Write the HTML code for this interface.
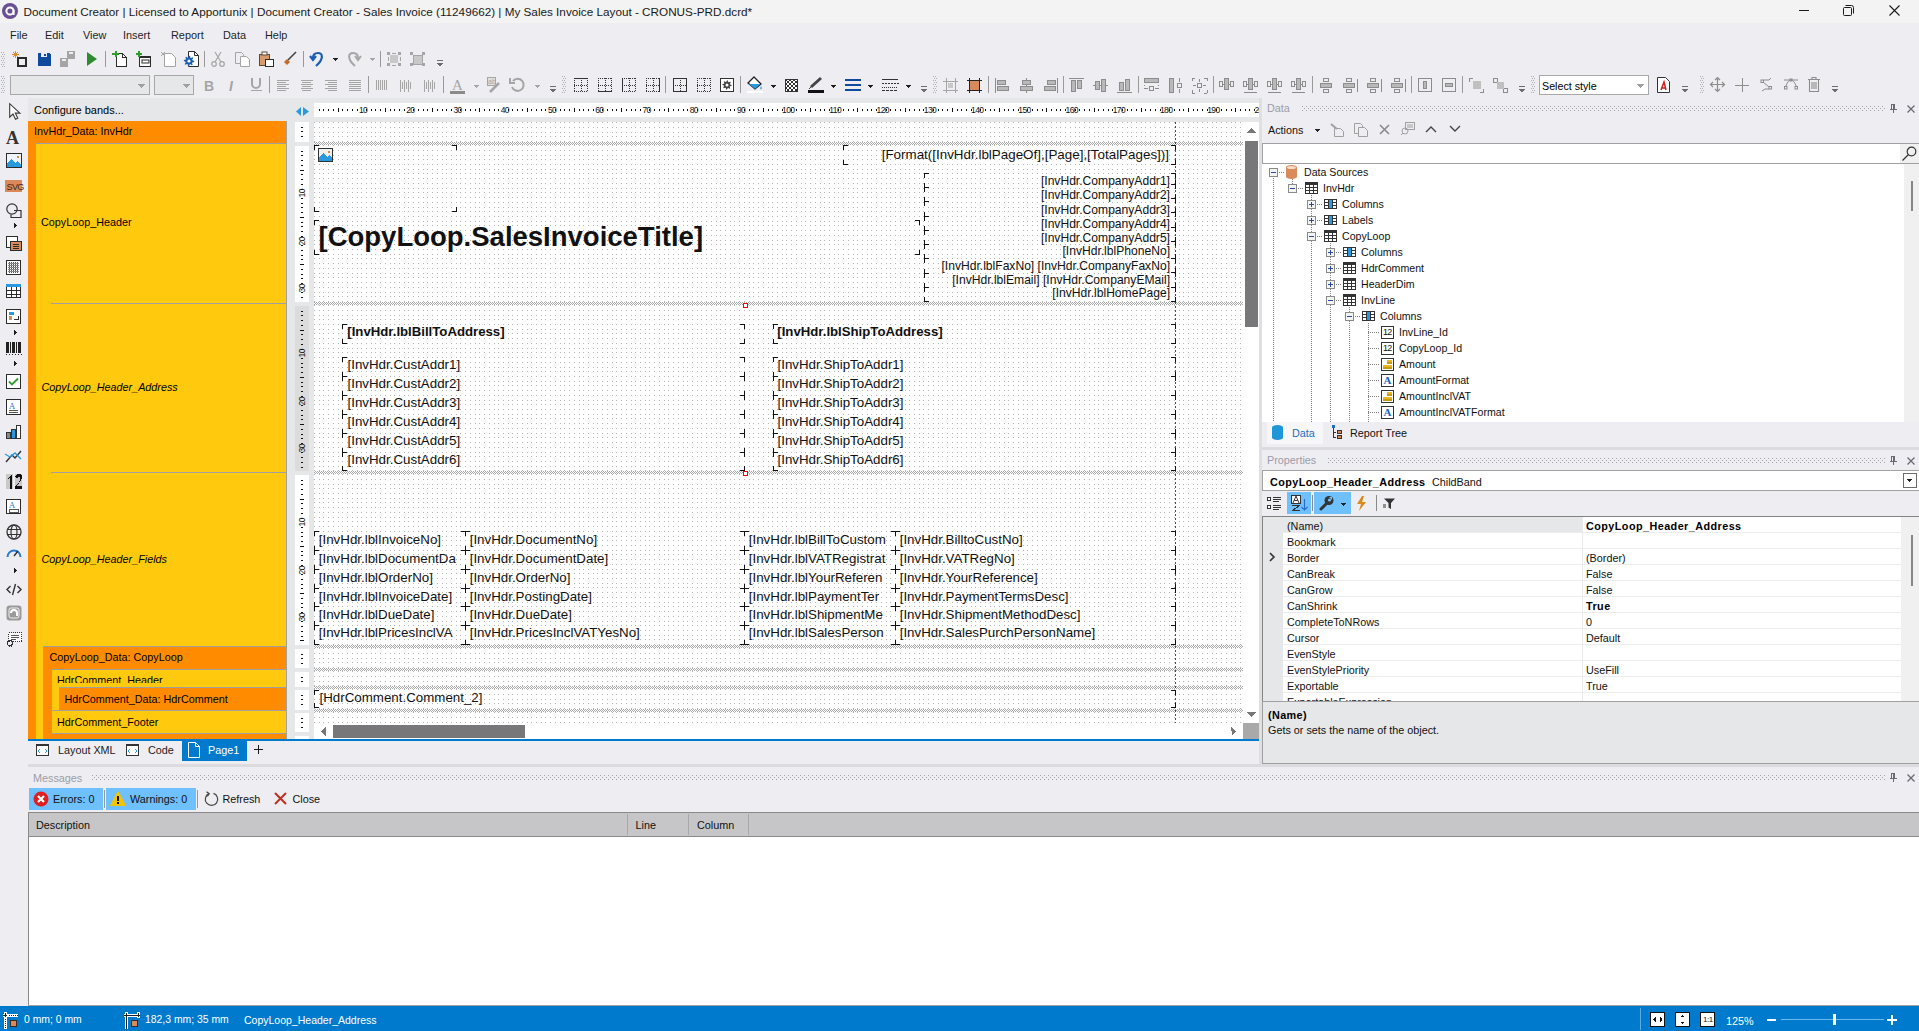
<!DOCTYPE html>
<html><head><meta charset="utf-8">
<style>
*{margin:0;padding:0;box-sizing:border-box}
html,body{width:1919px;height:1031px;overflow:hidden;background:#eeeef2;font-family:"Liberation Sans",sans-serif;font-size:11px;color:#000;position:relative}
.a{position:absolute;display:block}
.t{position:absolute;white-space:nowrap;line-height:1}
svg{overflow:visible}
</style></head><body>
<svg width="0" height="0" style="position:absolute"><defs>
<pattern id="pdh" width="2" height="1" patternUnits="userSpaceOnUse"><rect width="1" height="1" fill="#808080"/></pattern>
<pattern id="pdv" width="1" height="2" patternUnits="userSpaceOnUse"><rect width="1" height="1" fill="#808080"/></pattern>
<pattern id="pgr" width="4" height="4" patternUnits="userSpaceOnUse"><rect width="1" height="1" fill="#a4a4a8"/><rect x="2" y="2" width="1" height="1" fill="#a4a4a8"/></pattern>
<pattern id="pck" width="2" height="2" patternUnits="userSpaceOnUse"><rect width="1" height="1" fill="#a8a8a8"/><rect x="1" y="1" width="1" height="1" fill="#a8a8a8"/></pattern>
<pattern id="ptg" width="4" height="4" patternUnits="userSpaceOnUse"><rect width="1" height="1" fill="#a4a4a8"/><rect x="2" y="2" width="1" height="1" fill="#a4a4a8"/></pattern>
</defs></svg>
<div class="a" style="left:0px;top:0px;width:1919px;height:23px;background:#f3f3f3;"></div>
<svg class="a" style="left:2px;top:3px;" width="17" height="17" viewBox="0 0 17 17"><circle cx="8" cy="8" r="8" fill="#6a4f96"/><circle cx="8" cy="8" r="3.6" fill="none" stroke="#fff" stroke-width="2"/><rect x="10.6" y="7" width="2" height="5" fill="#fff"/></svg>
<div class="t" style="left:23.5px;top:5.86px;font-size:11.73px;color:#1a1a1a;">Document Creator | Licensed to Apportunix | Document Creator - Sales Invoice (11249662) | My Sales Invoice Layout - CRONUS-PRD.dcrd*</div>
<div class="a" style="left:1799px;top:10px;width:10px;height:1px;background:#1a1a1a;"></div>
<svg class="a" style="left:1843px;top:5px;shape-rendering:auto" width="11" height="11" viewBox="0 0 11 11" shape-rendering="crispEdges"><rect x="0.5" y="2.5" width="8" height="8" fill="none" stroke="#1a1a1a" rx="1"/><path d="M2.5 0.5h6a2 2 0 0 1 2 2v6" fill="none" stroke="#1a1a1a"/></svg>
<svg class="a" style="left:1889px;top:5px;" width="11" height="11" viewBox="0 0 11 11"><path d="M0.5 0.5L10.5 10.5M10.5 0.5L0.5 10.5" stroke="#1a1a1a" stroke-width="1.1"/></svg>
<div class="a" style="left:0px;top:23px;width:1919px;height:75px;background:#eeeef2;"></div>
<div class="t" style="left:10px;top:30.25px;font-size:10.9px;color:#1e1e1e;">File</div>
<div class="t" style="left:45px;top:30.25px;font-size:10.9px;color:#1e1e1e;">Edit</div>
<div class="t" style="left:83px;top:30.25px;font-size:10.9px;color:#1e1e1e;">View</div>
<div class="t" style="left:123px;top:30.25px;font-size:10.9px;color:#1e1e1e;">Insert</div>
<div class="t" style="left:171px;top:30.25px;font-size:10.9px;color:#1e1e1e;">Report</div>
<div class="t" style="left:223px;top:30.25px;font-size:10.9px;color:#1e1e1e;">Data</div>
<div class="t" style="left:265px;top:30.25px;font-size:10.9px;color:#1e1e1e;">Help</div>
<svg class="a" style="left:1px;top:52px;" width="4" height="16" viewBox="0 0 4 16" shape-rendering="crispEdges"><rect x="0" y="0" width="1" height="1" fill="#b0b0b8"/><rect x="2" y="0" width="1" height="1" fill="#b0b0b8"/><rect x="1" y="2" width="1" height="1" fill="#b0b0b8"/><rect x="3" y="2" width="1" height="1" fill="#b0b0b8"/><rect x="0" y="4" width="1" height="1" fill="#b0b0b8"/><rect x="2" y="4" width="1" height="1" fill="#b0b0b8"/><rect x="1" y="6" width="1" height="1" fill="#b0b0b8"/><rect x="3" y="6" width="1" height="1" fill="#b0b0b8"/><rect x="0" y="8" width="1" height="1" fill="#b0b0b8"/><rect x="2" y="8" width="1" height="1" fill="#b0b0b8"/><rect x="1" y="10" width="1" height="1" fill="#b0b0b8"/><rect x="3" y="10" width="1" height="1" fill="#b0b0b8"/><rect x="0" y="12" width="1" height="1" fill="#b0b0b8"/><rect x="2" y="12" width="1" height="1" fill="#b0b0b8"/><rect x="1" y="14" width="1" height="1" fill="#b0b0b8"/><rect x="3" y="14" width="1" height="1" fill="#b0b0b8"/></svg>
<svg class="a" style="left:12px;top:51px;" width="16" height="16" viewBox="0 0 16 16" shape-rendering="crispEdges"><path d="M5 6h10v10h-10z M7 8v6h6v-6z" fill="#2b2b2b" fill-rule="evenodd"/><path d="M3 0v7M0 3.5h7M1 1l5 5M6 1l-5 5" stroke="#e08a2c" stroke-width="1"/></svg>
<svg class="a" style="left:38px;top:53px;" width="13" height="13" viewBox="0 0 13 13" shape-rendering="crispEdges"><path d="M0 0h11l2 2v11h-13z" fill="#0e4a9e"/><rect x="3" y="0" width="6" height="4" fill="#eeeef2"/><rect x="6" y="1" width="2" height="2" fill="#0e4a9e"/></svg>
<svg class="a" style="left:60px;top:51px;" width="16" height="16" viewBox="0 0 16 16" shape-rendering="crispEdges"><path d="M7 0h8v8h-8z M0 7h8v9h-8z" fill="#a5a5a5"/><rect x="9" y="1" width="4" height="2" fill="#eeeef2"/><rect x="2" y="8" width="4" height="2" fill="#eeeef2"/></svg>
<svg class="a" style="left:87px;top:52px;shape-rendering:auto" width="10" height="14" viewBox="0 0 10 14" shape-rendering="crispEdges"><path d="M0 0L10 7L0 14z" fill="#2e8b2e"/></svg>
<div class="a" style="left:105px;top:51px;width:1px;height:16px;background:#9a9a9a;"></div>
<svg class="a" style="left:112px;top:51px;" width="16" height="16" viewBox="0 0 16 16" shape-rendering="crispEdges"><path d="M4.5 2.5h6l4 4v9h-10z" fill="#fff" stroke="#2b2b2b"/><path d="M10.5 2.5v4h4" fill="none" stroke="#2b2b2b"/><rect x="0" y="2" width="7" height="2" fill="#2e9e2e"/><rect x="2.5" y="0" width="2" height="6" fill="#2e9e2e"/></svg>
<svg class="a" style="left:135px;top:51px;shape-rendering:auto" width="16" height="16" viewBox="0 0 16 16" shape-rendering="crispEdges"><rect x="4.5" y="5.5" width="11" height="10" fill="#fff" stroke="#2b2b2b"/><rect x="4" y="5" width="12" height="2" fill="#2b2b2b"/><rect x="7" y="9" width="7" height="3" fill="none" stroke="#2b2b2b"/><path d="M1 3h6M4 0v6" stroke="#2e9e2e" stroke-width="2"/></svg>
<svg class="a" style="left:160px;top:51px;shape-rendering:auto" width="16" height="16" viewBox="0 0 16 16" shape-rendering="crispEdges"><path d="M4.5 2.5h7l4 4v9h-11z" fill="#fff" stroke="#a5a5a5"/><path d="M1 1l4 4M5 1l-4 4" stroke="#a5a5a5"/></svg>
<svg class="a" style="left:183px;top:51px;" width="16" height="16" viewBox="0 0 16 16"><path d="M5.5 0.5h6l4 4v11h-10z" fill="#fff" stroke="#2b2b2b"/><path d="M11.5 0.5v4h4" fill="none" stroke="#2b2b2b"/><path d="M6.00 4.80L7.01 4.90L7.38 6.67L8.00 7.01L9.68 6.32L10.32 7.11L9.33 8.62L9.53 9.30L11.20 10.00L11.10 11.01L9.33 11.38L8.99 12.00L9.68 13.68L8.89 14.32L7.38 13.33L6.70 13.53L6.00 15.20L4.99 15.10L4.62 13.33L4.00 12.99L2.32 13.68L1.68 12.89L2.67 11.38L2.47 10.70L0.80 10.00L0.90 8.99L2.67 8.62L3.01 8.00L2.32 6.32L3.11 5.68L4.62 6.67L5.30 6.47z" fill="#1a5fb4"/><circle cx="6" cy="10" r="1.6" fill="#fff"/></svg>
<div class="a" style="left:204px;top:51px;width:1px;height:16px;background:#9a9a9a;"></div>
<svg class="a" style="left:211px;top:51px;" width="14" height="16" viewBox="0 0 14 16"><circle cx="3" cy="13" r="2.3" fill="none" stroke="#a5a5a5" stroke-width="1.2"/><circle cx="11" cy="13" r="2.3" fill="none" stroke="#a5a5a5" stroke-width="1.2"/><path d="M4 11L10 1M10 11L4 1" stroke="#a5a5a5" stroke-width="1.2"/></svg>
<svg class="a" style="left:235px;top:51px;shape-rendering:auto" width="15" height="16" viewBox="0 0 15 16" shape-rendering="crispEdges"><path d="M0.5 1.5h6l2 2v9h-8z" fill="#eeeef2" stroke="#a5a5a5"/><path d="M5.5 5.5h6l3 3v7h-9z" fill="#fff" stroke="#a5a5a5"/></svg>
<svg class="a" style="left:259px;top:51px;shape-rendering:auto" width="15" height="16" viewBox="0 0 15 16" shape-rendering="crispEdges"><rect x="0.5" y="3.5" width="10" height="11" fill="#d89a6a" stroke="#5a4a3a"/><rect x="3" y="1" width="5" height="3" fill="#fff" stroke="#5a4a3a"/><rect x="6.5" y="8.5" width="8" height="7" fill="#fff" stroke="#2b2b2b"/></svg>
<svg class="a" style="left:283px;top:51px;" width="14" height="14" viewBox="0 0 14 14"><path d="M1 11l3-3 3 3-3 3z" fill="#c8692a"/><path d="M5 9L13 1" stroke="#444" stroke-width="1.6"/></svg>
<div class="a" style="left:303px;top:51px;width:1px;height:16px;background:#9a9a9a;"></div>
<svg class="a" style="left:310px;top:51px;" width="14" height="16" viewBox="0 0 14 16"><path d="M6 15C14 8 13 2 8 2C5 2 3 4 3 7" fill="none" stroke="#1a5fb4" stroke-width="2.2"/><path d="M0 5l3 4 3-4" fill="none" stroke="#1a5fb4" stroke-width="2.2"/></svg>
<svg class="a" style="left:333px;top:58px;" width="5" height="3" viewBox="0 0 5 3" shape-rendering="crispEdges"><path d="M0 0h5v1h-1v1h-1v1h-1v-1h-1v-1h-1z" fill="#1e1e1e"/></svg>
<svg class="a" style="left:347px;top:51px;" width="14" height="16" viewBox="0 0 14 16"><path d="M8 15C0 8 1 2 6 2C9 2 11 4 11 7" fill="none" stroke="#a5a5a5" stroke-width="2"/><path d="M14 5l-3 4-3-4" fill="none" stroke="#a5a5a5" stroke-width="2"/></svg>
<svg class="a" style="left:370px;top:58px;" width="5" height="3" viewBox="0 0 5 3" shape-rendering="crispEdges"><path d="M0 0h5v1h-1v1h-1v1h-1v-1h-1v-1h-1z" fill="#a5a5a5"/></svg>
<div class="a" style="left:380px;top:51px;width:1px;height:16px;background:#9a9a9a;"></div>
<svg class="a" style="left:387px;top:52px;" width="14" height="14" viewBox="0 0 14 14" shape-rendering="crispEdges"><rect x="3" y="3" width="8" height="8" fill="#c8c8c8"/><path d="M0 0h3v3h-3zM11 0h3v3h-3zM0 11h3v3h-3zM11 11h3v3h-3z" fill="#a5a5a5"/><path d="M5 1h4M1 5v4M13 5v4M5 13h4" stroke="#a5a5a5"/></svg>
<svg class="a" style="left:410px;top:52px;" width="15" height="14" viewBox="0 0 15 14" shape-rendering="crispEdges"><rect x="3" y="3" width="9" height="9" fill="#c8c8c8" stroke="#a5a5a5"/><path d="M0 0h3v3h-3zM12 0h3v3h-3zM0 11h3v3h-3zM12 11h3v3h-3z" fill="#a5a5a5"/></svg>
<svg class="a" style="left:437px;top:60px;" width="6" height="7" viewBox="0 0 6 7" shape-rendering="crispEdges"><rect x="0" y="0" width="6" height="1" fill="#6d6d6d"/><path d="M0 3h6v1h-1v1h-1v1h-2v-1h-1v-1h-1z" fill="#6d6d6d"/></svg>
<svg class="a" style="left:1px;top:76px;" width="4" height="18" viewBox="0 0 4 18" shape-rendering="crispEdges"><rect x="0" y="0" width="1" height="1" fill="#b0b0b8"/><rect x="2" y="0" width="1" height="1" fill="#b0b0b8"/><rect x="1" y="2" width="1" height="1" fill="#b0b0b8"/><rect x="3" y="2" width="1" height="1" fill="#b0b0b8"/><rect x="0" y="4" width="1" height="1" fill="#b0b0b8"/><rect x="2" y="4" width="1" height="1" fill="#b0b0b8"/><rect x="1" y="6" width="1" height="1" fill="#b0b0b8"/><rect x="3" y="6" width="1" height="1" fill="#b0b0b8"/><rect x="0" y="8" width="1" height="1" fill="#b0b0b8"/><rect x="2" y="8" width="1" height="1" fill="#b0b0b8"/><rect x="1" y="10" width="1" height="1" fill="#b0b0b8"/><rect x="3" y="10" width="1" height="1" fill="#b0b0b8"/><rect x="0" y="12" width="1" height="1" fill="#b0b0b8"/><rect x="2" y="12" width="1" height="1" fill="#b0b0b8"/><rect x="1" y="14" width="1" height="1" fill="#b0b0b8"/><rect x="3" y="14" width="1" height="1" fill="#b0b0b8"/><rect x="0" y="16" width="1" height="1" fill="#b0b0b8"/><rect x="2" y="16" width="1" height="1" fill="#b0b0b8"/></svg>
<div class="a" style="left:10px;top:75px;width:140px;height:20px;background:#e6e7e8;border:1px solid #a8a8a8;"></div>
<svg class="a" style="left:138px;top:84px;" width="7" height="4" viewBox="0 0 7 4" shape-rendering="crispEdges"><path d="M0 0h7v1h-1v1h-1v1h-1v1h-1v-1h-1v-1h-1v-1h-1z" fill="#a0a0a0"/></svg>
<div class="a" style="left:154px;top:75px;width:40px;height:20px;background:#e6e7e8;border:1px solid #a8a8a8;"></div>
<svg class="a" style="left:183px;top:84px;" width="7" height="4" viewBox="0 0 7 4" shape-rendering="crispEdges"><path d="M0 0h7v1h-1v1h-1v1h-1v1h-1v-1h-1v-1h-1v-1h-1z" fill="#a0a0a0"/></svg>
<div class="t" style="left:204px;top:79.38px;font-size:14px;color:#a5a5a5;font-weight:bold;">B</div>
<div class="t" style="left:229px;top:79.38px;font-size:14px;color:#a5a5a5;font-style:italic;font-weight:bold;">I</div>
<svg class="a" style="left:251px;top:78px;shape-rendering:auto" width="11" height="14" viewBox="0 0 11 14" shape-rendering="crispEdges"><path d="M1 0v6a4 4 0 0 0 8 0v-6" fill="none" stroke="#a5a5a5" stroke-width="2"/><rect x="0" y="12" width="11" height="1" fill="#a5a5a5"/></svg>
<div class="a" style="left:269px;top:76px;width:1px;height:17px;background:#9a9a9a;"></div>
<svg class="a" style="left:277px;top:79px;" width="12" height="12" viewBox="0 0 12 12" shape-rendering="crispEdges"><rect x="0" y="1" width="12" height="1" fill="#a5a5a5"/><rect x="0" y="3" width="9" height="1" fill="#a5a5a5"/><rect x="0" y="5" width="12" height="1" fill="#a5a5a5"/><rect x="0" y="7" width="9" height="1" fill="#a5a5a5"/><rect x="0" y="9" width="12" height="1" fill="#a5a5a5"/><rect x="0" y="11" width="9" height="1" fill="#a5a5a5"/></svg>
<svg class="a" style="left:301px;top:79px;" width="12" height="12" viewBox="0 0 12 12" shape-rendering="crispEdges"><rect x="0" y="1" width="12" height="1" fill="#a5a5a5"/><rect x="1" y="3" width="9" height="1" fill="#a5a5a5"/><rect x="0" y="5" width="12" height="1" fill="#a5a5a5"/><rect x="1" y="7" width="9" height="1" fill="#a5a5a5"/><rect x="0" y="9" width="12" height="1" fill="#a5a5a5"/><rect x="1" y="11" width="9" height="1" fill="#a5a5a5"/></svg>
<svg class="a" style="left:325px;top:79px;" width="12" height="12" viewBox="0 0 12 12" shape-rendering="crispEdges"><rect x="0" y="1" width="12" height="1" fill="#a5a5a5"/><rect x="3" y="3" width="9" height="1" fill="#a5a5a5"/><rect x="0" y="5" width="12" height="1" fill="#a5a5a5"/><rect x="3" y="7" width="9" height="1" fill="#a5a5a5"/><rect x="0" y="9" width="12" height="1" fill="#a5a5a5"/><rect x="3" y="11" width="9" height="1" fill="#a5a5a5"/></svg>
<svg class="a" style="left:349px;top:79px;" width="12" height="12" viewBox="0 0 12 12" shape-rendering="crispEdges"><rect x="0" y="1" width="12" height="1" fill="#a5a5a5"/><rect x="0" y="3" width="12" height="1" fill="#a5a5a5"/><rect x="0" y="5" width="12" height="1" fill="#a5a5a5"/><rect x="0" y="7" width="12" height="1" fill="#a5a5a5"/><rect x="0" y="9" width="12" height="1" fill="#a5a5a5"/><rect x="0" y="11" width="12" height="1" fill="#a5a5a5"/></svg>
<div class="a" style="left:368px;top:76px;width:1px;height:17px;background:#9a9a9a;"></div>
<svg class="a" style="left:376px;top:79px;" width="12" height="13" viewBox="0 0 12 13" shape-rendering="crispEdges"><rect x="0" y="1" width="1" height="10" fill="#a5a5a5"/><rect x="2" y="1" width="1" height="10" fill="#a5a5a5"/><rect x="4" y="1" width="1" height="10" fill="#a5a5a5"/><rect x="6" y="1" width="1" height="10" fill="#a5a5a5"/><rect x="8" y="1" width="1" height="10" fill="#a5a5a5"/><rect x="10" y="1" width="1" height="10" fill="#a5a5a5"/></svg>
<svg class="a" style="left:400px;top:79px;" width="12" height="13" viewBox="0 0 12 13" shape-rendering="crispEdges"><rect x="0" y="1" width="1" height="12" fill="#a5a5a5"/><rect x="2" y="3" width="1" height="7" fill="#a5a5a5"/><rect x="4" y="1" width="1" height="12" fill="#a5a5a5"/><rect x="6" y="3" width="1" height="7" fill="#a5a5a5"/><rect x="8" y="1" width="1" height="12" fill="#a5a5a5"/><rect x="10" y="3" width="1" height="7" fill="#a5a5a5"/></svg>
<svg class="a" style="left:424px;top:79px;" width="12" height="13" viewBox="0 0 12 13" shape-rendering="crispEdges"><rect x="0" y="1" width="1" height="12" fill="#a5a5a5"/><rect x="2" y="3" width="1" height="7" fill="#a5a5a5"/><rect x="4" y="1" width="1" height="12" fill="#a5a5a5"/><rect x="6" y="3" width="1" height="7" fill="#a5a5a5"/><rect x="8" y="1" width="1" height="12" fill="#a5a5a5"/><rect x="10" y="3" width="1" height="7" fill="#a5a5a5"/></svg>
<div class="a" style="left:443px;top:76px;width:1px;height:17px;background:#9a9a9a;"></div>
<div class="t" style="left:452px;top:78.05px;font-size:15px;color:#a5a5a5;font-family:'Liberation Serif';">A</div>
<div class="a" style="left:450px;top:91px;width:15px;height:3px;background:#8a8a8a;"></div>
<svg class="a" style="left:474px;top:85px;" width="5" height="3" viewBox="0 0 5 3" shape-rendering="crispEdges"><path d="M0 0h5v1h-1v1h-1v1h-1v-1h-1v-1h-1z" fill="#a5a5a5"/></svg>
<svg class="a" style="left:487px;top:77px;" width="14" height="16" viewBox="0 0 14 16"><rect x="0.5" y="0.5" width="8" height="8" fill="#e0e0e0" stroke="#a5a5a5"/><text x="1" y="7" font-size="7" fill="#a5a5a5" font-family="Liberation Sans">ab</text><path d="M3 15L12 6" stroke="#a5a5a5" stroke-width="2.5"/></svg>
<svg class="a" style="left:510px;top:77px;" width="15" height="16" viewBox="0 0 15 16"><path d="M3 4A6 6 0 1 1 2 10" fill="none" stroke="#a5a5a5" stroke-width="2"/><path d="M0 1v5h5" fill="none" stroke="#a5a5a5" stroke-width="2"/></svg>
<svg class="a" style="left:535px;top:85px;" width="5" height="3" viewBox="0 0 5 3" shape-rendering="crispEdges"><path d="M0 0h5v1h-1v1h-1v1h-1v-1h-1v-1h-1z" fill="#a5a5a5"/></svg>
<svg class="a" style="left:550px;top:86px;" width="6" height="7" viewBox="0 0 6 7" shape-rendering="crispEdges"><rect x="0" y="0" width="6" height="1" fill="#6d6d6d"/><path d="M0 3h6v1h-1v1h-1v1h-2v-1h-1v-1h-1z" fill="#6d6d6d"/></svg>
<svg class="a" style="left:562px;top:76px;" width="4" height="18" viewBox="0 0 4 18" shape-rendering="crispEdges"><rect x="0" y="0" width="1" height="1" fill="#b0b0b8"/><rect x="2" y="0" width="1" height="1" fill="#b0b0b8"/><rect x="1" y="2" width="1" height="1" fill="#b0b0b8"/><rect x="3" y="2" width="1" height="1" fill="#b0b0b8"/><rect x="0" y="4" width="1" height="1" fill="#b0b0b8"/><rect x="2" y="4" width="1" height="1" fill="#b0b0b8"/><rect x="1" y="6" width="1" height="1" fill="#b0b0b8"/><rect x="3" y="6" width="1" height="1" fill="#b0b0b8"/><rect x="0" y="8" width="1" height="1" fill="#b0b0b8"/><rect x="2" y="8" width="1" height="1" fill="#b0b0b8"/><rect x="1" y="10" width="1" height="1" fill="#b0b0b8"/><rect x="3" y="10" width="1" height="1" fill="#b0b0b8"/><rect x="0" y="12" width="1" height="1" fill="#b0b0b8"/><rect x="2" y="12" width="1" height="1" fill="#b0b0b8"/><rect x="1" y="14" width="1" height="1" fill="#b0b0b8"/><rect x="3" y="14" width="1" height="1" fill="#b0b0b8"/><rect x="0" y="16" width="1" height="1" fill="#b0b0b8"/><rect x="2" y="16" width="1" height="1" fill="#b0b0b8"/></svg>
<svg class="a" style="left:574px;top:78px;" width="14" height="14" viewBox="0 0 14 14" shape-rendering="crispEdges"><rect x="0" y="0" width="1" height="1" fill="#333"/><rect x="0" y="13" width="1" height="1" fill="#333"/><rect x="0" y="0" width="1" height="1" fill="#333"/><rect x="13" y="0" width="1" height="1" fill="#333"/><rect x="0" y="7" width="1" height="1" fill="#333"/><rect x="7" y="0" width="1" height="1" fill="#333"/><rect x="2" y="0" width="1" height="1" fill="#333"/><rect x="2" y="13" width="1" height="1" fill="#333"/><rect x="0" y="2" width="1" height="1" fill="#333"/><rect x="13" y="2" width="1" height="1" fill="#333"/><rect x="2" y="7" width="1" height="1" fill="#333"/><rect x="7" y="2" width="1" height="1" fill="#333"/><rect x="4" y="0" width="1" height="1" fill="#333"/><rect x="4" y="13" width="1" height="1" fill="#333"/><rect x="0" y="4" width="1" height="1" fill="#333"/><rect x="13" y="4" width="1" height="1" fill="#333"/><rect x="4" y="7" width="1" height="1" fill="#333"/><rect x="7" y="4" width="1" height="1" fill="#333"/><rect x="6" y="0" width="1" height="1" fill="#333"/><rect x="6" y="13" width="1" height="1" fill="#333"/><rect x="0" y="6" width="1" height="1" fill="#333"/><rect x="13" y="6" width="1" height="1" fill="#333"/><rect x="6" y="7" width="1" height="1" fill="#333"/><rect x="7" y="6" width="1" height="1" fill="#333"/><rect x="8" y="0" width="1" height="1" fill="#333"/><rect x="8" y="13" width="1" height="1" fill="#333"/><rect x="0" y="8" width="1" height="1" fill="#333"/><rect x="13" y="8" width="1" height="1" fill="#333"/><rect x="8" y="7" width="1" height="1" fill="#333"/><rect x="7" y="8" width="1" height="1" fill="#333"/><rect x="10" y="0" width="1" height="1" fill="#333"/><rect x="10" y="13" width="1" height="1" fill="#333"/><rect x="0" y="10" width="1" height="1" fill="#333"/><rect x="13" y="10" width="1" height="1" fill="#333"/><rect x="10" y="7" width="1" height="1" fill="#333"/><rect x="7" y="10" width="1" height="1" fill="#333"/><rect x="12" y="0" width="1" height="1" fill="#333"/><rect x="12" y="13" width="1" height="1" fill="#333"/><rect x="0" y="12" width="1" height="1" fill="#333"/><rect x="13" y="12" width="1" height="1" fill="#333"/><rect x="12" y="7" width="1" height="1" fill="#333"/><rect x="7" y="12" width="1" height="1" fill="#333"/><rect x="0" y="0" width="14" height="1" fill="#333"/></svg>
<svg class="a" style="left:598px;top:78px;" width="14" height="14" viewBox="0 0 14 14" shape-rendering="crispEdges"><rect x="0" y="0" width="1" height="1" fill="#333"/><rect x="0" y="13" width="1" height="1" fill="#333"/><rect x="0" y="0" width="1" height="1" fill="#333"/><rect x="13" y="0" width="1" height="1" fill="#333"/><rect x="0" y="7" width="1" height="1" fill="#333"/><rect x="7" y="0" width="1" height="1" fill="#333"/><rect x="2" y="0" width="1" height="1" fill="#333"/><rect x="2" y="13" width="1" height="1" fill="#333"/><rect x="0" y="2" width="1" height="1" fill="#333"/><rect x="13" y="2" width="1" height="1" fill="#333"/><rect x="2" y="7" width="1" height="1" fill="#333"/><rect x="7" y="2" width="1" height="1" fill="#333"/><rect x="4" y="0" width="1" height="1" fill="#333"/><rect x="4" y="13" width="1" height="1" fill="#333"/><rect x="0" y="4" width="1" height="1" fill="#333"/><rect x="13" y="4" width="1" height="1" fill="#333"/><rect x="4" y="7" width="1" height="1" fill="#333"/><rect x="7" y="4" width="1" height="1" fill="#333"/><rect x="6" y="0" width="1" height="1" fill="#333"/><rect x="6" y="13" width="1" height="1" fill="#333"/><rect x="0" y="6" width="1" height="1" fill="#333"/><rect x="13" y="6" width="1" height="1" fill="#333"/><rect x="6" y="7" width="1" height="1" fill="#333"/><rect x="7" y="6" width="1" height="1" fill="#333"/><rect x="8" y="0" width="1" height="1" fill="#333"/><rect x="8" y="13" width="1" height="1" fill="#333"/><rect x="0" y="8" width="1" height="1" fill="#333"/><rect x="13" y="8" width="1" height="1" fill="#333"/><rect x="8" y="7" width="1" height="1" fill="#333"/><rect x="7" y="8" width="1" height="1" fill="#333"/><rect x="10" y="0" width="1" height="1" fill="#333"/><rect x="10" y="13" width="1" height="1" fill="#333"/><rect x="0" y="10" width="1" height="1" fill="#333"/><rect x="13" y="10" width="1" height="1" fill="#333"/><rect x="10" y="7" width="1" height="1" fill="#333"/><rect x="7" y="10" width="1" height="1" fill="#333"/><rect x="12" y="0" width="1" height="1" fill="#333"/><rect x="12" y="13" width="1" height="1" fill="#333"/><rect x="0" y="12" width="1" height="1" fill="#333"/><rect x="13" y="12" width="1" height="1" fill="#333"/><rect x="12" y="7" width="1" height="1" fill="#333"/><rect x="7" y="12" width="1" height="1" fill="#333"/><rect x="0" y="13" width="14" height="1" fill="#333"/></svg>
<svg class="a" style="left:622px;top:78px;" width="14" height="14" viewBox="0 0 14 14" shape-rendering="crispEdges"><rect x="0" y="0" width="1" height="1" fill="#333"/><rect x="0" y="13" width="1" height="1" fill="#333"/><rect x="0" y="0" width="1" height="1" fill="#333"/><rect x="13" y="0" width="1" height="1" fill="#333"/><rect x="0" y="7" width="1" height="1" fill="#333"/><rect x="7" y="0" width="1" height="1" fill="#333"/><rect x="2" y="0" width="1" height="1" fill="#333"/><rect x="2" y="13" width="1" height="1" fill="#333"/><rect x="0" y="2" width="1" height="1" fill="#333"/><rect x="13" y="2" width="1" height="1" fill="#333"/><rect x="2" y="7" width="1" height="1" fill="#333"/><rect x="7" y="2" width="1" height="1" fill="#333"/><rect x="4" y="0" width="1" height="1" fill="#333"/><rect x="4" y="13" width="1" height="1" fill="#333"/><rect x="0" y="4" width="1" height="1" fill="#333"/><rect x="13" y="4" width="1" height="1" fill="#333"/><rect x="4" y="7" width="1" height="1" fill="#333"/><rect x="7" y="4" width="1" height="1" fill="#333"/><rect x="6" y="0" width="1" height="1" fill="#333"/><rect x="6" y="13" width="1" height="1" fill="#333"/><rect x="0" y="6" width="1" height="1" fill="#333"/><rect x="13" y="6" width="1" height="1" fill="#333"/><rect x="6" y="7" width="1" height="1" fill="#333"/><rect x="7" y="6" width="1" height="1" fill="#333"/><rect x="8" y="0" width="1" height="1" fill="#333"/><rect x="8" y="13" width="1" height="1" fill="#333"/><rect x="0" y="8" width="1" height="1" fill="#333"/><rect x="13" y="8" width="1" height="1" fill="#333"/><rect x="8" y="7" width="1" height="1" fill="#333"/><rect x="7" y="8" width="1" height="1" fill="#333"/><rect x="10" y="0" width="1" height="1" fill="#333"/><rect x="10" y="13" width="1" height="1" fill="#333"/><rect x="0" y="10" width="1" height="1" fill="#333"/><rect x="13" y="10" width="1" height="1" fill="#333"/><rect x="10" y="7" width="1" height="1" fill="#333"/><rect x="7" y="10" width="1" height="1" fill="#333"/><rect x="12" y="0" width="1" height="1" fill="#333"/><rect x="12" y="13" width="1" height="1" fill="#333"/><rect x="0" y="12" width="1" height="1" fill="#333"/><rect x="13" y="12" width="1" height="1" fill="#333"/><rect x="12" y="7" width="1" height="1" fill="#333"/><rect x="7" y="12" width="1" height="1" fill="#333"/><rect x="0" y="0" width="1" height="14" fill="#333"/></svg>
<svg class="a" style="left:646px;top:78px;" width="14" height="14" viewBox="0 0 14 14" shape-rendering="crispEdges"><rect x="0" y="0" width="1" height="1" fill="#333"/><rect x="0" y="13" width="1" height="1" fill="#333"/><rect x="0" y="0" width="1" height="1" fill="#333"/><rect x="13" y="0" width="1" height="1" fill="#333"/><rect x="0" y="7" width="1" height="1" fill="#333"/><rect x="7" y="0" width="1" height="1" fill="#333"/><rect x="2" y="0" width="1" height="1" fill="#333"/><rect x="2" y="13" width="1" height="1" fill="#333"/><rect x="0" y="2" width="1" height="1" fill="#333"/><rect x="13" y="2" width="1" height="1" fill="#333"/><rect x="2" y="7" width="1" height="1" fill="#333"/><rect x="7" y="2" width="1" height="1" fill="#333"/><rect x="4" y="0" width="1" height="1" fill="#333"/><rect x="4" y="13" width="1" height="1" fill="#333"/><rect x="0" y="4" width="1" height="1" fill="#333"/><rect x="13" y="4" width="1" height="1" fill="#333"/><rect x="4" y="7" width="1" height="1" fill="#333"/><rect x="7" y="4" width="1" height="1" fill="#333"/><rect x="6" y="0" width="1" height="1" fill="#333"/><rect x="6" y="13" width="1" height="1" fill="#333"/><rect x="0" y="6" width="1" height="1" fill="#333"/><rect x="13" y="6" width="1" height="1" fill="#333"/><rect x="6" y="7" width="1" height="1" fill="#333"/><rect x="7" y="6" width="1" height="1" fill="#333"/><rect x="8" y="0" width="1" height="1" fill="#333"/><rect x="8" y="13" width="1" height="1" fill="#333"/><rect x="0" y="8" width="1" height="1" fill="#333"/><rect x="13" y="8" width="1" height="1" fill="#333"/><rect x="8" y="7" width="1" height="1" fill="#333"/><rect x="7" y="8" width="1" height="1" fill="#333"/><rect x="10" y="0" width="1" height="1" fill="#333"/><rect x="10" y="13" width="1" height="1" fill="#333"/><rect x="0" y="10" width="1" height="1" fill="#333"/><rect x="13" y="10" width="1" height="1" fill="#333"/><rect x="10" y="7" width="1" height="1" fill="#333"/><rect x="7" y="10" width="1" height="1" fill="#333"/><rect x="12" y="0" width="1" height="1" fill="#333"/><rect x="12" y="13" width="1" height="1" fill="#333"/><rect x="0" y="12" width="1" height="1" fill="#333"/><rect x="13" y="12" width="1" height="1" fill="#333"/><rect x="12" y="7" width="1" height="1" fill="#333"/><rect x="7" y="12" width="1" height="1" fill="#333"/><rect x="13" y="0" width="1" height="14" fill="#333"/></svg>
<div class="a" style="left:665px;top:76px;width:1px;height:17px;background:#9a9a9a;"></div>
<svg class="a" style="left:673px;top:78px;" width="14" height="14" viewBox="0 0 14 14" shape-rendering="crispEdges"><rect x="0" y="0" width="1" height="1" fill="#333"/><rect x="0" y="13" width="1" height="1" fill="#333"/><rect x="0" y="0" width="1" height="1" fill="#333"/><rect x="13" y="0" width="1" height="1" fill="#333"/><rect x="0" y="7" width="1" height="1" fill="#333"/><rect x="7" y="0" width="1" height="1" fill="#333"/><rect x="2" y="0" width="1" height="1" fill="#333"/><rect x="2" y="13" width="1" height="1" fill="#333"/><rect x="0" y="2" width="1" height="1" fill="#333"/><rect x="13" y="2" width="1" height="1" fill="#333"/><rect x="2" y="7" width="1" height="1" fill="#333"/><rect x="7" y="2" width="1" height="1" fill="#333"/><rect x="4" y="0" width="1" height="1" fill="#333"/><rect x="4" y="13" width="1" height="1" fill="#333"/><rect x="0" y="4" width="1" height="1" fill="#333"/><rect x="13" y="4" width="1" height="1" fill="#333"/><rect x="4" y="7" width="1" height="1" fill="#333"/><rect x="7" y="4" width="1" height="1" fill="#333"/><rect x="6" y="0" width="1" height="1" fill="#333"/><rect x="6" y="13" width="1" height="1" fill="#333"/><rect x="0" y="6" width="1" height="1" fill="#333"/><rect x="13" y="6" width="1" height="1" fill="#333"/><rect x="6" y="7" width="1" height="1" fill="#333"/><rect x="7" y="6" width="1" height="1" fill="#333"/><rect x="8" y="0" width="1" height="1" fill="#333"/><rect x="8" y="13" width="1" height="1" fill="#333"/><rect x="0" y="8" width="1" height="1" fill="#333"/><rect x="13" y="8" width="1" height="1" fill="#333"/><rect x="8" y="7" width="1" height="1" fill="#333"/><rect x="7" y="8" width="1" height="1" fill="#333"/><rect x="10" y="0" width="1" height="1" fill="#333"/><rect x="10" y="13" width="1" height="1" fill="#333"/><rect x="0" y="10" width="1" height="1" fill="#333"/><rect x="13" y="10" width="1" height="1" fill="#333"/><rect x="10" y="7" width="1" height="1" fill="#333"/><rect x="7" y="10" width="1" height="1" fill="#333"/><rect x="12" y="0" width="1" height="1" fill="#333"/><rect x="12" y="13" width="1" height="1" fill="#333"/><rect x="0" y="12" width="1" height="1" fill="#333"/><rect x="13" y="12" width="1" height="1" fill="#333"/><rect x="12" y="7" width="1" height="1" fill="#333"/><rect x="7" y="12" width="1" height="1" fill="#333"/><path d="M0 0h14v14h-14z M1 1v12h12v-12z" fill="#333" fill-rule="evenodd"/></svg>
<svg class="a" style="left:697px;top:78px;" width="14" height="14" viewBox="0 0 14 14" shape-rendering="crispEdges"><rect x="0" y="0" width="1" height="1" fill="#333"/><rect x="0" y="13" width="1" height="1" fill="#333"/><rect x="0" y="0" width="1" height="1" fill="#333"/><rect x="13" y="0" width="1" height="1" fill="#333"/><rect x="0" y="7" width="1" height="1" fill="#333"/><rect x="7" y="0" width="1" height="1" fill="#333"/><rect x="2" y="0" width="1" height="1" fill="#333"/><rect x="2" y="13" width="1" height="1" fill="#333"/><rect x="0" y="2" width="1" height="1" fill="#333"/><rect x="13" y="2" width="1" height="1" fill="#333"/><rect x="2" y="7" width="1" height="1" fill="#333"/><rect x="7" y="2" width="1" height="1" fill="#333"/><rect x="4" y="0" width="1" height="1" fill="#333"/><rect x="4" y="13" width="1" height="1" fill="#333"/><rect x="0" y="4" width="1" height="1" fill="#333"/><rect x="13" y="4" width="1" height="1" fill="#333"/><rect x="4" y="7" width="1" height="1" fill="#333"/><rect x="7" y="4" width="1" height="1" fill="#333"/><rect x="6" y="0" width="1" height="1" fill="#333"/><rect x="6" y="13" width="1" height="1" fill="#333"/><rect x="0" y="6" width="1" height="1" fill="#333"/><rect x="13" y="6" width="1" height="1" fill="#333"/><rect x="6" y="7" width="1" height="1" fill="#333"/><rect x="7" y="6" width="1" height="1" fill="#333"/><rect x="8" y="0" width="1" height="1" fill="#333"/><rect x="8" y="13" width="1" height="1" fill="#333"/><rect x="0" y="8" width="1" height="1" fill="#333"/><rect x="13" y="8" width="1" height="1" fill="#333"/><rect x="8" y="7" width="1" height="1" fill="#333"/><rect x="7" y="8" width="1" height="1" fill="#333"/><rect x="10" y="0" width="1" height="1" fill="#333"/><rect x="10" y="13" width="1" height="1" fill="#333"/><rect x="0" y="10" width="1" height="1" fill="#333"/><rect x="13" y="10" width="1" height="1" fill="#333"/><rect x="10" y="7" width="1" height="1" fill="#333"/><rect x="7" y="10" width="1" height="1" fill="#333"/><rect x="12" y="0" width="1" height="1" fill="#333"/><rect x="12" y="13" width="1" height="1" fill="#333"/><rect x="0" y="12" width="1" height="1" fill="#333"/><rect x="13" y="12" width="1" height="1" fill="#333"/><rect x="12" y="7" width="1" height="1" fill="#333"/><rect x="7" y="12" width="1" height="1" fill="#333"/></svg>
<svg class="a" style="left:720px;top:78px;" width="14" height="14" viewBox="0 0 14 14"><rect x="0.5" y="0.5" width="13" height="13" fill="#fff" stroke="#333"/><path d="M7.00 2.40L7.90 2.49L8.22 4.04L8.78 4.34L10.25 3.75L10.82 4.44L9.96 5.78L10.14 6.38L11.60 7.00L11.51 7.90L9.96 8.22L9.66 8.78L10.25 10.25L9.56 10.82L8.22 9.96L7.62 10.14L7.00 11.60L6.10 11.51L5.78 9.96L5.22 9.66L3.75 10.25L3.18 9.56L4.04 8.22L3.86 7.62L2.40 7.00L2.49 6.10L4.04 5.78L4.34 5.22L3.75 3.75L4.44 3.18L5.78 4.04L6.38 3.86z" fill="#444"/><circle cx="7" cy="7" r="1.5" fill="#fff"/></svg>
<div class="a" style="left:740px;top:76px;width:1px;height:17px;background:#9a9a9a;"></div>
<svg class="a" style="left:747px;top:76px;" width="16" height="17" viewBox="0 0 16 17"><path d="M7 1L14 8L8 13L1 7z" fill="#fff" stroke="#222" stroke-width="1.3"/><path d="M2 8L13 8L8 13z" fill="#2a9ae0"/><path d="M14 10q-1.5 2.5 0 3.5q1.5-1 0-3.5z" fill="#2a9ae0"/><rect x="0" y="15" width="16" height="2" fill="#fff"/></svg>
<svg class="a" style="left:771px;top:85px;" width="5" height="3" viewBox="0 0 5 3" shape-rendering="crispEdges"><path d="M0 0h5v1h-1v1h-1v1h-1v-1h-1v-1h-1z" fill="#1e1e1e"/></svg>
<svg class="a" style="left:785px;top:79px;" width="12" height="12" viewBox="0 0 12 12" shape-rendering="crispEdges"><rect x="0" y="0" width="2" height="2" fill="#333"/><rect x="0" y="2" width="2" height="2" fill="#fff"/><rect x="0" y="4" width="2" height="2" fill="#333"/><rect x="0" y="6" width="2" height="2" fill="#fff"/><rect x="0" y="8" width="2" height="2" fill="#333"/><rect x="0" y="10" width="2" height="2" fill="#fff"/><rect x="2" y="0" width="2" height="2" fill="#fff"/><rect x="2" y="2" width="2" height="2" fill="#333"/><rect x="2" y="4" width="2" height="2" fill="#fff"/><rect x="2" y="6" width="2" height="2" fill="#333"/><rect x="2" y="8" width="2" height="2" fill="#fff"/><rect x="2" y="10" width="2" height="2" fill="#333"/><rect x="4" y="0" width="2" height="2" fill="#333"/><rect x="4" y="2" width="2" height="2" fill="#fff"/><rect x="4" y="4" width="2" height="2" fill="#333"/><rect x="4" y="6" width="2" height="2" fill="#fff"/><rect x="4" y="8" width="2" height="2" fill="#333"/><rect x="4" y="10" width="2" height="2" fill="#fff"/><rect x="6" y="0" width="2" height="2" fill="#fff"/><rect x="6" y="2" width="2" height="2" fill="#333"/><rect x="6" y="4" width="2" height="2" fill="#fff"/><rect x="6" y="6" width="2" height="2" fill="#333"/><rect x="6" y="8" width="2" height="2" fill="#fff"/><rect x="6" y="10" width="2" height="2" fill="#333"/><rect x="8" y="0" width="2" height="2" fill="#333"/><rect x="8" y="2" width="2" height="2" fill="#fff"/><rect x="8" y="4" width="2" height="2" fill="#333"/><rect x="8" y="6" width="2" height="2" fill="#fff"/><rect x="8" y="8" width="2" height="2" fill="#333"/><rect x="8" y="10" width="2" height="2" fill="#fff"/><rect x="10" y="0" width="2" height="2" fill="#fff"/><rect x="10" y="2" width="2" height="2" fill="#333"/><rect x="10" y="4" width="2" height="2" fill="#fff"/><rect x="10" y="6" width="2" height="2" fill="#333"/><rect x="10" y="8" width="2" height="2" fill="#fff"/><rect x="10" y="10" width="2" height="2" fill="#333"/><rect x="0" y="0" width="12" height="12" fill="none" stroke="#333"/></svg>
<svg class="a" style="left:808px;top:76px;" width="16" height="17" viewBox="0 0 16 17"><path d="M3 11L13 2" stroke="#444" stroke-width="3"/><path d="M1 13l2-2" stroke="#444" stroke-width="1"/><rect x="0" y="14" width="16" height="3" fill="#111"/></svg>
<svg class="a" style="left:831px;top:85px;" width="5" height="3" viewBox="0 0 5 3" shape-rendering="crispEdges"><path d="M0 0h5v1h-1v1h-1v1h-1v-1h-1v-1h-1z" fill="#1e1e1e"/></svg>
<svg class="a" style="left:845px;top:79px;" width="16" height="12" viewBox="0 0 16 12" shape-rendering="crispEdges"><rect x="0" y="0" width="16" height="2" fill="#0e4a9e"/><rect x="0" y="5" width="16" height="2" fill="#0e4a9e"/><rect x="0" y="10" width="16" height="2" fill="#0e4a9e"/></svg>
<svg class="a" style="left:868px;top:85px;" width="5" height="3" viewBox="0 0 5 3" shape-rendering="crispEdges"><path d="M0 0h5v1h-1v1h-1v1h-1v-1h-1v-1h-1z" fill="#1e1e1e"/></svg>
<svg class="a" style="left:882px;top:79px;" width="16" height="12" viewBox="0 0 16 12" shape-rendering="crispEdges"><rect x="0" y="0" width="16" height="1" fill="#333"/><rect x="0" y="4" width="2" height="1" fill="#333"/><rect x="3" y="4" width="2" height="1" fill="#333"/><rect x="6" y="4" width="2" height="1" fill="#333"/><rect x="9" y="4" width="2" height="1" fill="#333"/><rect x="12" y="4" width="2" height="1" fill="#333"/><rect x="15" y="4" width="2" height="1" fill="#333"/><rect x="0" y="8" width="1" height="1" fill="#333"/><rect x="2" y="8" width="1" height="1" fill="#333"/><rect x="4" y="8" width="1" height="1" fill="#333"/><rect x="6" y="8" width="1" height="1" fill="#333"/><rect x="8" y="8" width="1" height="1" fill="#333"/><rect x="10" y="8" width="1" height="1" fill="#333"/><rect x="12" y="8" width="1" height="1" fill="#333"/><rect x="14" y="8" width="1" height="1" fill="#333"/><rect x="0" y="11" width="3" height="1" fill="#333"/><rect x="4" y="11" width="3" height="1" fill="#333"/><rect x="8" y="11" width="3" height="1" fill="#333"/><rect x="12" y="11" width="3" height="1" fill="#333"/></svg>
<svg class="a" style="left:906px;top:85px;" width="5" height="3" viewBox="0 0 5 3" shape-rendering="crispEdges"><path d="M0 0h5v1h-1v1h-1v1h-1v-1h-1v-1h-1z" fill="#1e1e1e"/></svg>
<svg class="a" style="left:921px;top:86px;" width="6" height="7" viewBox="0 0 6 7" shape-rendering="crispEdges"><rect x="0" y="0" width="6" height="1" fill="#6d6d6d"/><path d="M0 3h6v1h-1v1h-1v1h-2v-1h-1v-1h-1z" fill="#6d6d6d"/></svg>
<svg class="a" style="left:933px;top:76px;" width="4" height="18" viewBox="0 0 4 18" shape-rendering="crispEdges"><rect x="0" y="0" width="1" height="1" fill="#b0b0b8"/><rect x="2" y="0" width="1" height="1" fill="#b0b0b8"/><rect x="1" y="2" width="1" height="1" fill="#b0b0b8"/><rect x="3" y="2" width="1" height="1" fill="#b0b0b8"/><rect x="0" y="4" width="1" height="1" fill="#b0b0b8"/><rect x="2" y="4" width="1" height="1" fill="#b0b0b8"/><rect x="1" y="6" width="1" height="1" fill="#b0b0b8"/><rect x="3" y="6" width="1" height="1" fill="#b0b0b8"/><rect x="0" y="8" width="1" height="1" fill="#b0b0b8"/><rect x="2" y="8" width="1" height="1" fill="#b0b0b8"/><rect x="1" y="10" width="1" height="1" fill="#b0b0b8"/><rect x="3" y="10" width="1" height="1" fill="#b0b0b8"/><rect x="0" y="12" width="1" height="1" fill="#b0b0b8"/><rect x="2" y="12" width="1" height="1" fill="#b0b0b8"/><rect x="1" y="14" width="1" height="1" fill="#b0b0b8"/><rect x="3" y="14" width="1" height="1" fill="#b0b0b8"/><rect x="0" y="16" width="1" height="1" fill="#b0b0b8"/><rect x="2" y="16" width="1" height="1" fill="#b0b0b8"/></svg>
<svg class="a" style="left:943px;top:78px;" width="15" height="15" viewBox="0 0 15 15" shape-rendering="crispEdges"><path d="M3 0v15M12 0v15M0 3h15M0 12h15" stroke="#a5a5a5"/><rect x="5" y="5" width="5" height="5" fill="#c8c8c8"/></svg>
<svg class="a" style="left:967px;top:78px;" width="15" height="15" viewBox="0 0 15 15" shape-rendering="crispEdges"><rect x="3" y="3" width="9" height="9" fill="#d9895a"/><path d="M2 0v15M12 0v15M0 2h15M0 12h15" stroke="#222" stroke-width="1"/></svg>
<div class="a" style="left:988px;top:76px;width:1px;height:17px;background:#9a9a9a;"></div>
<svg class="a" style="left:995px;top:78px;" width="15" height="15" viewBox="0 0 15 15" shape-rendering="crispEdges"><rect x="0" y="0" width="1" height="15" fill="#8c8c8c"/><rect x="2.5" y="2.5" width="8" height="4" fill="#b9b9b9" stroke="#8c8c8c"/><rect x="2.5" y="8.5" width="11" height="4" fill="#b9b9b9" stroke="#8c8c8c"/></svg>
<svg class="a" style="left:1019px;top:78px;" width="15" height="15" viewBox="0 0 15 15" shape-rendering="crispEdges"><rect x="7" y="0" width="1" height="15" fill="#8c8c8c"/><rect x="3.5" y="2.5" width="8" height="4" fill="#b9b9b9" stroke="#8c8c8c"/><rect x="1.5" y="8.5" width="12" height="4" fill="#b9b9b9" stroke="#8c8c8c"/></svg>
<svg class="a" style="left:1043px;top:78px;" width="15" height="15" viewBox="0 0 15 15" shape-rendering="crispEdges"><rect x="14" y="0" width="1" height="15" fill="#8c8c8c"/><rect x="4.5" y="2.5" width="8" height="4" fill="#b9b9b9" stroke="#8c8c8c"/><rect x="1.5" y="8.5" width="11" height="4" fill="#b9b9b9" stroke="#8c8c8c"/></svg>
<div class="a" style="left:1063px;top:76px;width:1px;height:17px;background:#9a9a9a;"></div>
<svg class="a" style="left:1069px;top:78px;" width="15" height="15" viewBox="0 0 15 15" shape-rendering="crispEdges"><rect x="0" y="0" width="15" height="1" fill="#8c8c8c"/><rect x="2.5" y="2.5" width="4" height="11" fill="#b9b9b9" stroke="#8c8c8c"/><rect x="8.5" y="2.5" width="4" height="8" fill="#b9b9b9" stroke="#8c8c8c"/></svg>
<svg class="a" style="left:1093px;top:78px;" width="15" height="15" viewBox="0 0 15 15" shape-rendering="crispEdges"><rect x="0" y="7" width="15" height="1" fill="#8c8c8c"/><rect x="2.5" y="3.5" width="4" height="8" fill="#b9b9b9" stroke="#8c8c8c"/><rect x="8.5" y="1.5" width="4" height="12" fill="#b9b9b9" stroke="#8c8c8c"/></svg>
<svg class="a" style="left:1117px;top:78px;" width="15" height="15" viewBox="0 0 15 15" shape-rendering="crispEdges"><rect x="0" y="14" width="15" height="1" fill="#8c8c8c"/><rect x="2.5" y="4.5" width="4" height="8" fill="#b9b9b9" stroke="#8c8c8c"/><rect x="8.5" y="1.5" width="4" height="11" fill="#b9b9b9" stroke="#8c8c8c"/></svg>
<div class="a" style="left:1138px;top:76px;width:1px;height:17px;background:#9a9a9a;"></div>
<svg class="a" style="left:1144px;top:78px;" width="15" height="15" viewBox="0 0 15 15" shape-rendering="crispEdges"><rect x="0.5" y="0.5" width="14" height="4" fill="#b9b9b9" stroke="#8c8c8c"/><rect x="5.5" y="8.5" width="4" height="4" fill="none" stroke="#8c8c8c"/><path d="M0 10h4M11 10h4M0 7v1M14 7v1" stroke="#8c8c8c"/></svg>
<svg class="a" style="left:1169px;top:78px;" width="15" height="15" viewBox="0 0 15 15" shape-rendering="crispEdges"><rect x="0.5" y="0.5" width="4" height="14" fill="#b9b9b9" stroke="#8c8c8c"/><rect x="8.5" y="5.5" width="4" height="4" fill="none" stroke="#8c8c8c"/><path d="M10 0v4M10 11v4" stroke="#8c8c8c"/></svg>
<svg class="a" style="left:1192px;top:78px;" width="15" height="15" viewBox="0 0 15 15" shape-rendering="crispEdges"><rect x="5.5" y="5.5" width="4" height="4" fill="none" stroke="#8c8c8c"/><path d="M0 0h3M0 0v3M12 0h3M15 0v3M0 15h3M0 12v3M12 15h3M15 12v3M7 1v3M7 11v3M1 7h3M11 7h3" stroke="#8c8c8c"/></svg>
<div class="a" style="left:1213px;top:76px;width:1px;height:17px;background:#9a9a9a;"></div>
<svg class="a" style="left:1219px;top:78px;" width="16" height="16" viewBox="0 0 16 16" shape-rendering="crispEdges"><rect x="0.5" y="3.5" width="3" height="5" fill="none" stroke="#8c8c8c"/><rect x="5.5" y="0.5" width="4" height="11" fill="#b9b9b9" stroke="#8c8c8c"/><rect x="11.5" y="3.5" width="3" height="5" fill="none" stroke="#8c8c8c"/><path d="M4 6h1M10 6h1" stroke="#8c8c8c"/></svg>
<svg class="a" style="left:1243px;top:78px;" width="16" height="16" viewBox="0 0 16 16" shape-rendering="crispEdges"><rect x="0.5" y="3.5" width="3" height="5" fill="none" stroke="#8c8c8c"/><rect x="5.5" y="0.5" width="4" height="11" fill="#b9b9b9" stroke="#8c8c8c"/><rect x="11.5" y="3.5" width="3" height="5" fill="none" stroke="#8c8c8c"/><path d="M4 6h1M10 6h1" stroke="#8c8c8c"/><path d="M1 14h13" stroke="#8c8c8c"/></svg>
<svg class="a" style="left:1267px;top:78px;" width="16" height="16" viewBox="0 0 16 16" shape-rendering="crispEdges"><rect x="0.5" y="3.5" width="3" height="5" fill="none" stroke="#8c8c8c"/><rect x="5.5" y="0.5" width="4" height="11" fill="#b9b9b9" stroke="#8c8c8c"/><rect x="11.5" y="3.5" width="3" height="5" fill="none" stroke="#8c8c8c"/><path d="M4 6h1M10 6h1" stroke="#8c8c8c"/><path d="M1 14h13" stroke="#8c8c8c"/></svg>
<svg class="a" style="left:1291px;top:78px;" width="16" height="16" viewBox="0 0 16 16" shape-rendering="crispEdges"><rect x="0.5" y="3.5" width="3" height="5" fill="none" stroke="#8c8c8c"/><rect x="5.5" y="0.5" width="4" height="11" fill="#b9b9b9" stroke="#8c8c8c"/><rect x="11.5" y="3.5" width="3" height="5" fill="none" stroke="#8c8c8c"/><path d="M4 6h1M10 6h1" stroke="#8c8c8c"/><path d="M1 14h13" stroke="#8c8c8c"/></svg>
<div class="a" style="left:1312px;top:76px;width:1px;height:17px;background:#9a9a9a;"></div>
<svg class="a" style="left:1320px;top:78px;" width="16" height="16" viewBox="0 0 16 16" shape-rendering="crispEdges"><rect x="3.5" y="0.5" width="5" height="3" fill="none" stroke="#8c8c8c"/><rect x="0.5" y="5.5" width="11" height="4" fill="#b9b9b9" stroke="#8c8c8c"/><rect x="3.5" y="11.5" width="5" height="3" fill="none" stroke="#8c8c8c"/></svg>
<svg class="a" style="left:1343px;top:78px;" width="16" height="16" viewBox="0 0 16 16" shape-rendering="crispEdges"><rect x="3.5" y="0.5" width="5" height="3" fill="none" stroke="#8c8c8c"/><rect x="0.5" y="5.5" width="11" height="4" fill="#b9b9b9" stroke="#8c8c8c"/><rect x="3.5" y="11.5" width="5" height="3" fill="none" stroke="#8c8c8c"/><path d="M14 1v13" stroke="#8c8c8c"/></svg>
<svg class="a" style="left:1367px;top:78px;" width="16" height="16" viewBox="0 0 16 16" shape-rendering="crispEdges"><rect x="3.5" y="0.5" width="5" height="3" fill="none" stroke="#8c8c8c"/><rect x="0.5" y="5.5" width="11" height="4" fill="#b9b9b9" stroke="#8c8c8c"/><rect x="3.5" y="11.5" width="5" height="3" fill="none" stroke="#8c8c8c"/><path d="M14 1v13" stroke="#8c8c8c"/></svg>
<svg class="a" style="left:1391px;top:78px;" width="16" height="16" viewBox="0 0 16 16" shape-rendering="crispEdges"><rect x="3.5" y="0.5" width="5" height="3" fill="none" stroke="#8c8c8c"/><rect x="0.5" y="5.5" width="11" height="4" fill="#b9b9b9" stroke="#8c8c8c"/><rect x="3.5" y="11.5" width="5" height="3" fill="none" stroke="#8c8c8c"/><path d="M14 1v13" stroke="#8c8c8c"/></svg>
<div class="a" style="left:1411px;top:76px;width:1px;height:17px;background:#9a9a9a;"></div>
<svg class="a" style="left:1418px;top:78px;" width="14" height="14" viewBox="0 0 14 14" shape-rendering="crispEdges"><rect x="0.5" y="0.5" width="13" height="13" fill="none" stroke="#8c8c8c"/><rect x="5.5" y="3.5" width="3" height="7" fill="#b9b9b9" stroke="#8c8c8c"/></svg>
<svg class="a" style="left:1442px;top:78px;" width="14" height="14" viewBox="0 0 14 14" shape-rendering="crispEdges"><rect x="0.5" y="0.5" width="13" height="13" fill="none" stroke="#8c8c8c"/><rect x="3.5" y="5.5" width="7" height="3" fill="#b9b9b9" stroke="#8c8c8c"/></svg>
<div class="a" style="left:1462px;top:76px;width:1px;height:17px;background:#9a9a9a;"></div>
<svg class="a" style="left:1469px;top:78px;" width="15" height="15" viewBox="0 0 15 15" shape-rendering="crispEdges"><path d="M0.5 4v-3.5h3.5M11 14.5h3.5v-3.5" fill="none" stroke="#8c8c8c"/><rect x="4" y="3" width="8" height="8" fill="#c0c0c0"/></svg>
<svg class="a" style="left:1493px;top:78px;" width="15" height="15" viewBox="0 0 15 15" shape-rendering="crispEdges"><rect x="0.5" y="0.5" width="4" height="4" fill="none" stroke="#8c8c8c"/><rect x="10.5" y="10.5" width="4" height="4" fill="none" stroke="#8c8c8c"/><rect x="4" y="4" width="7" height="7" fill="#c0c0c0"/></svg>
<svg class="a" style="left:1519px;top:86px;" width="6" height="7" viewBox="0 0 6 7" shape-rendering="crispEdges"><rect x="0" y="0" width="6" height="1" fill="#6d6d6d"/><path d="M0 3h6v1h-1v1h-1v1h-2v-1h-1v-1h-1z" fill="#6d6d6d"/></svg>
<svg class="a" style="left:1531px;top:76px;" width="4" height="18" viewBox="0 0 4 18" shape-rendering="crispEdges"><rect x="0" y="0" width="1" height="1" fill="#b0b0b8"/><rect x="2" y="0" width="1" height="1" fill="#b0b0b8"/><rect x="1" y="2" width="1" height="1" fill="#b0b0b8"/><rect x="3" y="2" width="1" height="1" fill="#b0b0b8"/><rect x="0" y="4" width="1" height="1" fill="#b0b0b8"/><rect x="2" y="4" width="1" height="1" fill="#b0b0b8"/><rect x="1" y="6" width="1" height="1" fill="#b0b0b8"/><rect x="3" y="6" width="1" height="1" fill="#b0b0b8"/><rect x="0" y="8" width="1" height="1" fill="#b0b0b8"/><rect x="2" y="8" width="1" height="1" fill="#b0b0b8"/><rect x="1" y="10" width="1" height="1" fill="#b0b0b8"/><rect x="3" y="10" width="1" height="1" fill="#b0b0b8"/><rect x="0" y="12" width="1" height="1" fill="#b0b0b8"/><rect x="2" y="12" width="1" height="1" fill="#b0b0b8"/><rect x="1" y="14" width="1" height="1" fill="#b0b0b8"/><rect x="3" y="14" width="1" height="1" fill="#b0b0b8"/><rect x="0" y="16" width="1" height="1" fill="#b0b0b8"/><rect x="2" y="16" width="1" height="1" fill="#b0b0b8"/></svg>
<div class="a" style="left:1539px;top:75px;width:110px;height:20px;background:#fff;border:1px solid #a8a8a8;"></div>
<div class="t" style="left:1542px;top:80.62px;font-size:10.7px;color:#000;">Select style</div>
<svg class="a" style="left:1637px;top:84px;" width="7" height="4" viewBox="0 0 7 4" shape-rendering="crispEdges"><path d="M0 0h7v1h-1v1h-1v1h-1v1h-1v-1h-1v-1h-1v-1h-1z" fill="#a0a0a0"/></svg>
<svg class="a" style="left:1657px;top:77px;" width="13" height="16" viewBox="0 0 13 16"><path d="M0.5 0.5h8l4 4v11h-12z" fill="#fff" stroke="#333"/><path d="M4 13l3-8 2 8M5 11h3" stroke="#d02020" stroke-width="1.5" fill="none"/></svg>
<svg class="a" style="left:1682px;top:86px;" width="6" height="7" viewBox="0 0 6 7" shape-rendering="crispEdges"><rect x="0" y="0" width="6" height="1" fill="#6d6d6d"/><path d="M0 3h6v1h-1v1h-1v1h-2v-1h-1v-1h-1z" fill="#6d6d6d"/></svg>
<svg class="a" style="left:1700px;top:76px;" width="4" height="18" viewBox="0 0 4 18" shape-rendering="crispEdges"><rect x="0" y="0" width="1" height="1" fill="#b0b0b8"/><rect x="2" y="0" width="1" height="1" fill="#b0b0b8"/><rect x="1" y="2" width="1" height="1" fill="#b0b0b8"/><rect x="3" y="2" width="1" height="1" fill="#b0b0b8"/><rect x="0" y="4" width="1" height="1" fill="#b0b0b8"/><rect x="2" y="4" width="1" height="1" fill="#b0b0b8"/><rect x="1" y="6" width="1" height="1" fill="#b0b0b8"/><rect x="3" y="6" width="1" height="1" fill="#b0b0b8"/><rect x="0" y="8" width="1" height="1" fill="#b0b0b8"/><rect x="2" y="8" width="1" height="1" fill="#b0b0b8"/><rect x="1" y="10" width="1" height="1" fill="#b0b0b8"/><rect x="3" y="10" width="1" height="1" fill="#b0b0b8"/><rect x="0" y="12" width="1" height="1" fill="#b0b0b8"/><rect x="2" y="12" width="1" height="1" fill="#b0b0b8"/><rect x="1" y="14" width="1" height="1" fill="#b0b0b8"/><rect x="3" y="14" width="1" height="1" fill="#b0b0b8"/><rect x="0" y="16" width="1" height="1" fill="#b0b0b8"/><rect x="2" y="16" width="1" height="1" fill="#b0b0b8"/></svg>
<svg class="a" style="left:1710px;top:77px;" width="15" height="15" viewBox="0 0 15 15"><path d="M7.5 1v13M1 7.5h13M5 3l2.5-2.5L10 3M5 12l2.5 2.5L10 12M3 5L0.5 7.5L3 10M12 5l2.5 2.5L12 10" stroke="#8c8c8c" fill="none" stroke-width="1.2"/></svg>
<svg class="a" style="left:1735px;top:78px;" width="14" height="14" viewBox="0 0 14 14" shape-rendering="crispEdges"><path d="M7 0v14M0 7h14" stroke="#8c8c8c"/></svg>
<svg class="a" style="left:1760px;top:78px;" width="13" height="13" viewBox="0 0 13 13"><rect x="1" y="2" width="2.5" height="2.5" fill="none" stroke="#8c8c8c"/><rect x="9" y="8.5" width="2.5" height="2.5" fill="none" stroke="#8c8c8c"/><path d="M3 4L9 9M4 2h5l2-2M9 11H5l-3 2" fill="none" stroke="#8c8c8c"/></svg>
<svg class="a" style="left:1784px;top:78px;" width="14" height="13" viewBox="0 0 14 13"><rect x="0.5" y="8.5" width="2.5" height="2.5" fill="none" stroke="#8c8c8c"/><rect x="6" y="1" width="2" height="2" fill="none" stroke="#8c8c8c"/><rect x="11" y="8.5" width="2.5" height="2.5" fill="none" stroke="#8c8c8c"/><path d="M1.7 8.5Q4 2 7 2Q10 2 12.3 8.5M0 2h14" fill="none" stroke="#8c8c8c"/></svg>
<svg class="a" style="left:1808px;top:77px;" width="12" height="15" viewBox="0 0 12 15"><path d="M0 2.5h12M4 2.5v-2h4v2M1.5 3v11.5h9v-11.5M4 5v7M6 5v7M8 5v7" fill="none" stroke="#8c8c8c" stroke-width="1.1"/></svg>
<svg class="a" style="left:1832px;top:86px;" width="6" height="7" viewBox="0 0 6 7" shape-rendering="crispEdges"><rect x="0" y="0" width="6" height="1" fill="#6d6d6d"/><path d="M0 3h6v1h-1v1h-1v1h-2v-1h-1v-1h-1z" fill="#6d6d6d"/></svg>
<div class="a" style="left:0px;top:98px;width:1919px;height:908px;background:#eeeef2;"></div>
<div class="a" style="left:28px;top:98px;width:1231px;height:643px;background:#e6e7e8;"></div>
<svg class="a" style="left:9px;top:103px;" width="12" height="17" viewBox="0 0 12 17"><path d="M0.7 0.7v13.5l3.3-3.2 2.5 5.3 2.3-1.1-2.5-5.1h4.6z" fill="#fff" stroke="#3a3a3a" stroke-width="1.1"/></svg>
<div class="t" style="left:6px;top:128.56px;font-size:18px;color:#333;font-weight:bold;font-family:'Liberation Serif';">A</div>
<svg class="a" style="left:6px;top:153px;" width="16" height="15" viewBox="0 0 16 15" shape-rendering="crispEdges"><rect x="0.5" y="0.5" width="15" height="14" fill="#eef4fb" stroke="#2b2b2b"/><path d="M1 14v-4l4-4 4 4 2-2 4 4v2z" fill="#2a9ae0"/><rect x="11" y="3" width="2" height="2" fill="#e08a2c"/></svg>
<svg class="a" style="left:5px;top:180px;" width="17" height="12" viewBox="0 0 17 12" shape-rendering="crispEdges"><rect x="0" y="0" width="17" height="12" fill="#d9895a"/></svg>
<div class="t" style="left:6.5px;top:183.03px;font-size:9px;color:#3a2a1a;letter-spacing:-0.6px;">SVG</div>
<svg class="a" style="left:6px;top:203px;" width="16" height="15" viewBox="0 0 16 15"><circle cx="6" cy="6" r="5.2" fill="none" stroke="#333" stroke-width="1.2"/><path d="M8 7.5h7v7h-10v-3" fill="none" stroke="#333" stroke-width="1.2"/></svg>
<svg class="a" style="left:14px;top:223px;" width="3" height="5" viewBox="0 0 3 5" shape-rendering="crispEdges"><path d="M0 0h1v1h1v1h1v1h-1v1h-1v1h-1z" fill="#1e1e1e"/></svg>
<svg class="a" style="left:6px;top:236px;" width="16" height="15" viewBox="0 0 16 15" shape-rendering="crispEdges"><rect x="0.5" y="0.5" width="11" height="11" fill="#fff" stroke="#2b2b2b"/><rect x="4.5" y="5.5" width="11" height="9" fill="#d9895a" stroke="#2b2b2b"/><path d="M7 8h6M7 10h6M7 12h6" stroke="#2b2b2b"/></svg>
<svg class="a" style="left:6px;top:260px;" width="15" height="15" viewBox="0 0 15 15" shape-rendering="crispEdges"><rect x="0.5" y="0.5" width="14" height="14" fill="#fff" stroke="#2b2b2b"/><rect x="3" y="2" width="1" height="11" fill="#555"/><rect x="5" y="2" width="1" height="11" fill="#555"/><rect x="7" y="2" width="1" height="11" fill="#555"/><rect x="9" y="2" width="1" height="11" fill="#555"/><rect x="11" y="2" width="1" height="11" fill="#555"/><rect x="2" y="3" width="11" height="1" fill="#888"/><rect x="2" y="5" width="11" height="1" fill="#888"/><rect x="2" y="7" width="11" height="1" fill="#888"/><rect x="2" y="9" width="11" height="1" fill="#888"/><rect x="2" y="11" width="11" height="1" fill="#888"/></svg>
<svg class="a" style="left:6px;top:284px;" width="15" height="14" viewBox="0 0 15 14" shape-rendering="crispEdges"><rect x="0" y="0" width="15" height="14" fill="#fff"/><rect x="0" y="0" width="15" height="3" fill="#2a9ae0"/><path d="M0.5 3v10.5h14v-10.5M5 3v11M10 3v11M0 6.5h15M0 10h15" stroke="#2b2b2b" fill="none"/></svg>
<svg class="a" style="left:6px;top:309px;" width="15" height="15" viewBox="0 0 15 15" shape-rendering="crispEdges"><rect x="0.5" y="0.5" width="14" height="14" fill="#fff" stroke="#2b2b2b"/><rect x="3" y="3" width="5" height="3" fill="#2a9ae0"/><rect x="3" y="7" width="3" height="4" fill="#d9895a"/><path d="M8 10h4v-3" fill="none" stroke="#333"/></svg>
<svg class="a" style="left:14px;top:330px;" width="3" height="5" viewBox="0 0 3 5" shape-rendering="crispEdges"><path d="M0 0h1v1h1v1h1v1h-1v1h-1v1h-1z" fill="#1e1e1e"/></svg>
<svg class="a" style="left:6px;top:342px;" width="16" height="14" viewBox="0 0 16 14" shape-rendering="crispEdges"><rect x="0" y="0" width="2" height="11" fill="#222"/><rect x="2" y="0" width="1" height="11" fill="#222"/><rect x="4" y="0" width="1" height="11" fill="#222"/><rect x="6" y="0" width="2" height="11" fill="#222"/><rect x="8" y="0" width="1" height="11" fill="#222"/><rect x="10" y="0" width="1" height="11" fill="#222"/><rect x="12" y="0" width="2" height="11" fill="#222"/><rect x="14" y="0" width="1" height="11" fill="#222"/><rect x="0" y="12" width="1" height="1" fill="#222"/><rect x="3" y="12" width="1" height="1" fill="#222"/><rect x="6" y="12" width="1" height="1" fill="#222"/><rect x="9" y="12" width="1" height="1" fill="#222"/><rect x="12" y="12" width="1" height="1" fill="#222"/><rect x="15" y="12" width="1" height="1" fill="#222"/></svg>
<svg class="a" style="left:14px;top:361px;" width="3" height="5" viewBox="0 0 3 5" shape-rendering="crispEdges"><path d="M0 0h1v1h1v1h1v1h-1v1h-1v1h-1z" fill="#1e1e1e"/></svg>
<svg class="a" style="left:6px;top:374px;shape-rendering:auto" width="15" height="15" viewBox="0 0 15 15" shape-rendering="crispEdges"><rect x="0.5" y="0.5" width="14" height="14" fill="#fff" stroke="#2b2b2b"/><path d="M3 7.5l3 3 6-6" stroke="#2e9e2e" stroke-width="1.8" fill="none"/></svg>
<svg class="a" style="left:6px;top:399px;" width="15" height="16" viewBox="0 0 15 16" shape-rendering="crispEdges"><rect x="0.5" y="0.5" width="14" height="15" fill="#fff" stroke="#2b2b2b"/><path d="M3 11h9M3 13h9" stroke="#555"/></svg>
<div class="t" style="left:8.8px;top:402.03px;font-size:9px;color:#2a7ad0;font-family:'Liberation Serif';">A</div>
<svg class="a" style="left:6px;top:425px;" width="15" height="14" viewBox="0 0 15 14" shape-rendering="crispEdges"><rect x="0.5" y="7.5" width="4" height="6" fill="#888" stroke="#333"/><rect x="5.5" y="4.5" width="4" height="9" fill="#2a9ae0" stroke="#333"/><rect x="10.5" y="0.5" width="4" height="13" fill="#fff" stroke="#333"/></svg>
<svg class="a" style="left:5px;top:450px;" width="17" height="13" viewBox="0 0 17 13"><path d="M1 12L7 5L10 8L16 1" fill="none" stroke="#333" stroke-width="1.4"/><path d="M0 4L5 7L10 3L16 9" fill="none" stroke="#2a9ae0" stroke-width="1.4"/></svg>
<svg class="a" style="left:6px;top:474px;" width="16" height="15" viewBox="0 0 16 15" shape-rendering="crispEdges"><rect x="0" y="0" width="7" height="15" fill="#c8c8c8"/><rect x="9" y="0" width="7" height="15" fill="#c8c8c8"/><path d="M2 4l3-3h1v14h-2v-11l-2 1z" fill="#111"/><path d="M9 3q1-3 4-3q3 0 3 3q0 2-3 6l-2 3h5v3h-7v-2l4-5q1-2 1-4q0-1-1-1q-1 0-2 2z" fill="#111"/></svg>
<svg class="a" style="left:6px;top:499px;" width="15" height="15" viewBox="0 0 15 15" shape-rendering="crispEdges"><rect x="0.5" y="0.5" width="14" height="14" fill="#fff" stroke="#2b2b2b"/><path d="M3 10h9v3h-9z" fill="none" stroke="#555"/></svg>
<div class="t" style="left:8.8px;top:500.53px;font-size:9px;color:#2a7ad0;font-family:'Liberation Serif';">A</div>
<svg class="a" style="left:6px;top:524px;" width="16" height="16" viewBox="0 0 16 16"><circle cx="8" cy="8" r="7" fill="none" stroke="#333" stroke-width="1.3"/><ellipse cx="8" cy="8" rx="3" ry="7" fill="none" stroke="#333" stroke-width="1.2"/><path d="M1 5.5h14M1 10.5h14" stroke="#333" stroke-width="1.2"/></svg>
<svg class="a" style="left:6px;top:548px;" width="16" height="10" viewBox="0 0 16 10"><path d="M1.5 9A6.5 6.5 0 0 1 14.5 9" fill="none" stroke="#2a7ad0" stroke-width="2"/><path d="M8 8L12 3" stroke="#333" stroke-width="1.5"/></svg>
<svg class="a" style="left:14px;top:568px;" width="3" height="5" viewBox="0 0 3 5" shape-rendering="crispEdges"><path d="M0 0h1v1h1v1h1v1h-1v1h-1v1h-1z" fill="#1e1e1e"/></svg>
<svg class="a" style="left:6px;top:583px;" width="16" height="12" viewBox="0 0 16 12"><path d="M4.5 3L1 6.5L4.5 10M11.5 3L15 6.5L11.5 10M9.5 1L6.5 12" fill="none" stroke="#333" stroke-width="1.4"/></svg>
<svg class="a" style="left:6px;top:605px;" width="16" height="16" viewBox="0 0 16 16"><rect x="0.5" y="0.5" width="15" height="15" rx="3" fill="#9a9a9a"/><path d="M4 8a4 4 0 1 1 8 0v3h-2v-3a2 2 0 1 0 -4 0" fill="#fff"/><rect x="3" y="3" width="10" height="10" rx="2" fill="none" stroke="#eee"/></svg>
<svg class="a" style="left:6px;top:632px;" width="16" height="15" viewBox="0 0 16 15" shape-rendering="crispEdges"><rect x="2.5" y="0.5" width="13" height="9" fill="#fff" stroke="#333" stroke-dasharray="1 1"/><path d="M5 3h8M5 5h8M5 7h5" stroke="#555"/><circle cx="4" cy="11" r="2.5" fill="none" stroke="#333"/><path d="M3 13v2M5 13v2" stroke="#333"/></svg>
<div class="a" style="left:28px;top:98px;width:259px;height:23px;background:#e6e7e8;"></div>
<div class="t" style="left:34px;top:104.87px;font-size:11px;color:#000;">Configure bands...</div>
<div class="a" style="left:28px;top:121px;width:258px;height:618px;background:#ff8c00;"></div>
<div class="t" style="left:34px;top:126.04px;font-size:10.8px;color:#000;">InvHdr_Data: InvHdr</div>
<div class="a" style="left:35px;top:143px;width:251px;height:596px;background:#ffc90e;border-left:1px solid #a0a0a0;border-top:1px solid #a0a0a0;"></div>
<div class="a" style="left:286px;top:121px;width:1px;height:618px;background:#a0a0a0;"></div>
<div class="t" style="left:41px;top:217.04px;font-size:10.8px;color:#000;">CopyLoop_Header</div>
<div class="a" style="left:51px;top:303px;width:235px;height:1px;background:#a0a0a0;"></div>
<div class="t" style="left:41.5px;top:381.54px;font-size:10.8px;color:#000;font-style:italic;">CopyLoop_Header_Address</div>
<div class="a" style="left:51px;top:472px;width:235px;height:1px;background:#a0a0a0;"></div>
<div class="t" style="left:41.5px;top:554.34px;font-size:10.8px;color:#000;font-style:italic;">CopyLoop_Header_Fields</div>
<div class="a" style="left:43px;top:646px;width:243px;height:93px;background:#ff8c00;border-left:1px solid #a0a0a0;border-top:1px solid #a0a0a0;"></div>
<div class="t" style="left:49.5px;top:652.34px;font-size:10.8px;color:#000;">CopyLoop_Data: CopyLoop</div>
<div class="a" style="left:51px;top:669px;width:235px;height:70px;background:#ffc90e;border-left:1px solid #a0a0a0;border-top:1px solid #a0a0a0;"></div>
<div class="a" style="left:52px;top:670px;width:234px;height:13px;overflow:hidden">
<div class="t" style="left:5px;top:5.24px;font-size:10.8px;color:#000;">HdrComment_Header</div>
</div>
<div class="a" style="left:59px;top:687px;width:227px;height:23px;background:#ff8c00;border-left:1px solid #a0a0a0;border-top:1px solid #a0a0a0;"></div>
<div class="t" style="left:64.5px;top:693.54px;font-size:10.8px;color:#000;">HdrComment_Data: HdrComment</div>
<div class="a" style="left:51px;top:710px;width:235px;height:1px;background:#a0a0a0;"></div>
<div class="t" style="left:57px;top:716.54px;font-size:10.8px;color:#000;">HdrComment_Footer</div>
<div class="a" style="left:51px;top:733px;width:235px;height:6px;background:#ff8c00;border-top:1px solid #a0a0a0;"></div>
<div class="a" style="left:28px;top:739px;width:1231px;height:2px;background:#007acc;"></div>
<svg class="a" style="left:36px;top:744px;" width="13" height="12" viewBox="0 0 13 12" shape-rendering="crispEdges"><rect x="0.5" y="0.5" width="12" height="11" fill="#fff" stroke="#333"/><rect x="0" y="0" width="13" height="2" fill="#333"/><path d="M4 5l-2 2 2 2M9 5l2 2-2 2" fill="none" stroke="#2a9ae0"/></svg>
<div class="t" style="left:58px;top:745.04px;font-size:10.8px;color:#1a1a1a;">Layout XML</div>
<svg class="a" style="left:126px;top:744px;" width="13" height="12" viewBox="0 0 13 12" shape-rendering="crispEdges"><rect x="0.5" y="0.5" width="12" height="11" fill="#fff" stroke="#333"/><rect x="0" y="0" width="13" height="2" fill="#333"/><path d="M4 5l-2 2 2 2M9 5l2 2-2 2" fill="none" stroke="#2a9ae0"/></svg>
<div class="t" style="left:148px;top:745.04px;font-size:10.8px;color:#1a1a1a;">Code</div>
<div class="a" style="left:182px;top:741px;width:65px;height:20px;background:#007acc;"></div>
<svg class="a" style="left:188px;top:742px;" width="12" height="16" viewBox="0 0 12 16"><path d="M0.5 0.5h7l4 4v11h-11z" fill="none" stroke="#fff"/><path d="M7.5 0.5v4h4" fill="none" stroke="#fff"/></svg>
<div class="t" style="left:208px;top:745.04px;font-size:10.8px;color:#fff;">Page1</div>
<svg class="a" style="left:254px;top:745px;" width="9" height="9" viewBox="0 0 9 9" shape-rendering="crispEdges"><path d="M4 0v9M0 4h9" stroke="#1a1a1a"/></svg>
<div class="a" style="left:314px;top:103px;width:945px;height:14px;background:#fff;"></div>
<svg class="a" style="left:314px;top:103px;" width="945" height="14" viewBox="0 0 945 14" shape-rendering="crispEdges"><rect x="5" y="6" width="1" height="2" fill="#111"/><rect x="9" y="6" width="1" height="2" fill="#111"/><rect x="14" y="6" width="1" height="2" fill="#111"/><rect x="19" y="6" width="1" height="2" fill="#111"/><rect x="24" y="5" width="1" height="4" fill="#111"/><rect x="28" y="6" width="1" height="2" fill="#111"/><rect x="33" y="6" width="1" height="2" fill="#111"/><rect x="38" y="6" width="1" height="2" fill="#111"/><rect x="43" y="6" width="1" height="2" fill="#111"/><rect x="52" y="6" width="1" height="2" fill="#111"/><rect x="57" y="6" width="1" height="2" fill="#111"/><rect x="61" y="6" width="1" height="2" fill="#111"/><rect x="66" y="6" width="1" height="2" fill="#111"/><rect x="71" y="5" width="1" height="4" fill="#111"/><rect x="76" y="6" width="1" height="2" fill="#111"/><rect x="80" y="6" width="1" height="2" fill="#111"/><rect x="85" y="6" width="1" height="2" fill="#111"/><rect x="90" y="6" width="1" height="2" fill="#111"/><rect x="99" y="6" width="1" height="2" fill="#111"/><rect x="104" y="6" width="1" height="2" fill="#111"/><rect x="109" y="6" width="1" height="2" fill="#111"/><rect x="113" y="6" width="1" height="2" fill="#111"/><rect x="118" y="5" width="1" height="4" fill="#111"/><rect x="123" y="6" width="1" height="2" fill="#111"/><rect x="128" y="6" width="1" height="2" fill="#111"/><rect x="132" y="6" width="1" height="2" fill="#111"/><rect x="137" y="6" width="1" height="2" fill="#111"/><rect x="146" y="6" width="1" height="2" fill="#111"/><rect x="151" y="6" width="1" height="2" fill="#111"/><rect x="156" y="6" width="1" height="2" fill="#111"/><rect x="161" y="6" width="1" height="2" fill="#111"/><rect x="165" y="5" width="1" height="4" fill="#111"/><rect x="170" y="6" width="1" height="2" fill="#111"/><rect x="175" y="6" width="1" height="2" fill="#111"/><rect x="180" y="6" width="1" height="2" fill="#111"/><rect x="184" y="6" width="1" height="2" fill="#111"/><rect x="194" y="6" width="1" height="2" fill="#111"/><rect x="198" y="6" width="1" height="2" fill="#111"/><rect x="203" y="6" width="1" height="2" fill="#111"/><rect x="208" y="6" width="1" height="2" fill="#111"/><rect x="213" y="5" width="1" height="4" fill="#111"/><rect x="217" y="6" width="1" height="2" fill="#111"/><rect x="222" y="6" width="1" height="2" fill="#111"/><rect x="227" y="6" width="1" height="2" fill="#111"/><rect x="231" y="6" width="1" height="2" fill="#111"/><rect x="241" y="6" width="1" height="2" fill="#111"/><rect x="246" y="6" width="1" height="2" fill="#111"/><rect x="250" y="6" width="1" height="2" fill="#111"/><rect x="255" y="6" width="1" height="2" fill="#111"/><rect x="260" y="5" width="1" height="4" fill="#111"/><rect x="265" y="6" width="1" height="2" fill="#111"/><rect x="269" y="6" width="1" height="2" fill="#111"/><rect x="274" y="6" width="1" height="2" fill="#111"/><rect x="279" y="6" width="1" height="2" fill="#111"/><rect x="288" y="6" width="1" height="2" fill="#111"/><rect x="293" y="6" width="1" height="2" fill="#111"/><rect x="298" y="6" width="1" height="2" fill="#111"/><rect x="302" y="6" width="1" height="2" fill="#111"/><rect x="307" y="5" width="1" height="4" fill="#111"/><rect x="312" y="6" width="1" height="2" fill="#111"/><rect x="317" y="6" width="1" height="2" fill="#111"/><rect x="321" y="6" width="1" height="2" fill="#111"/><rect x="326" y="6" width="1" height="2" fill="#111"/><rect x="335" y="6" width="1" height="2" fill="#111"/><rect x="340" y="6" width="1" height="2" fill="#111"/><rect x="345" y="6" width="1" height="2" fill="#111"/><rect x="350" y="6" width="1" height="2" fill="#111"/><rect x="354" y="5" width="1" height="4" fill="#111"/><rect x="359" y="6" width="1" height="2" fill="#111"/><rect x="364" y="6" width="1" height="2" fill="#111"/><rect x="369" y="6" width="1" height="2" fill="#111"/><rect x="373" y="6" width="1" height="2" fill="#111"/><rect x="383" y="6" width="1" height="2" fill="#111"/><rect x="387" y="6" width="1" height="2" fill="#111"/><rect x="392" y="6" width="1" height="2" fill="#111"/><rect x="397" y="6" width="1" height="2" fill="#111"/><rect x="402" y="5" width="1" height="4" fill="#111"/><rect x="406" y="6" width="1" height="2" fill="#111"/><rect x="411" y="6" width="1" height="2" fill="#111"/><rect x="416" y="6" width="1" height="2" fill="#111"/><rect x="420" y="6" width="1" height="2" fill="#111"/><rect x="430" y="6" width="1" height="2" fill="#111"/><rect x="435" y="6" width="1" height="2" fill="#111"/><rect x="439" y="6" width="1" height="2" fill="#111"/><rect x="444" y="6" width="1" height="2" fill="#111"/><rect x="449" y="5" width="1" height="4" fill="#111"/><rect x="454" y="6" width="1" height="2" fill="#111"/><rect x="458" y="6" width="1" height="2" fill="#111"/><rect x="463" y="6" width="1" height="2" fill="#111"/><rect x="468" y="6" width="1" height="2" fill="#111"/><rect x="477" y="6" width="1" height="2" fill="#111"/><rect x="482" y="6" width="1" height="2" fill="#111"/><rect x="487" y="6" width="1" height="2" fill="#111"/><rect x="491" y="6" width="1" height="2" fill="#111"/><rect x="496" y="5" width="1" height="4" fill="#111"/><rect x="501" y="6" width="1" height="2" fill="#111"/><rect x="506" y="6" width="1" height="2" fill="#111"/><rect x="510" y="6" width="1" height="2" fill="#111"/><rect x="515" y="6" width="1" height="2" fill="#111"/><rect x="524" y="6" width="1" height="2" fill="#111"/><rect x="529" y="6" width="1" height="2" fill="#111"/><rect x="534" y="6" width="1" height="2" fill="#111"/><rect x="539" y="6" width="1" height="2" fill="#111"/><rect x="543" y="5" width="1" height="4" fill="#111"/><rect x="548" y="6" width="1" height="2" fill="#111"/><rect x="553" y="6" width="1" height="2" fill="#111"/><rect x="557" y="6" width="1" height="2" fill="#111"/><rect x="562" y="6" width="1" height="2" fill="#111"/><rect x="572" y="6" width="1" height="2" fill="#111"/><rect x="576" y="6" width="1" height="2" fill="#111"/><rect x="581" y="6" width="1" height="2" fill="#111"/><rect x="586" y="6" width="1" height="2" fill="#111"/><rect x="591" y="5" width="1" height="4" fill="#111"/><rect x="595" y="6" width="1" height="2" fill="#111"/><rect x="600" y="6" width="1" height="2" fill="#111"/><rect x="605" y="6" width="1" height="2" fill="#111"/><rect x="609" y="6" width="1" height="2" fill="#111"/><rect x="619" y="6" width="1" height="2" fill="#111"/><rect x="624" y="6" width="1" height="2" fill="#111"/><rect x="628" y="6" width="1" height="2" fill="#111"/><rect x="633" y="6" width="1" height="2" fill="#111"/><rect x="638" y="5" width="1" height="4" fill="#111"/><rect x="643" y="6" width="1" height="2" fill="#111"/><rect x="647" y="6" width="1" height="2" fill="#111"/><rect x="652" y="6" width="1" height="2" fill="#111"/><rect x="657" y="6" width="1" height="2" fill="#111"/><rect x="666" y="6" width="1" height="2" fill="#111"/><rect x="671" y="6" width="1" height="2" fill="#111"/><rect x="676" y="6" width="1" height="2" fill="#111"/><rect x="680" y="6" width="1" height="2" fill="#111"/><rect x="685" y="5" width="1" height="4" fill="#111"/><rect x="690" y="6" width="1" height="2" fill="#111"/><rect x="694" y="6" width="1" height="2" fill="#111"/><rect x="699" y="6" width="1" height="2" fill="#111"/><rect x="704" y="6" width="1" height="2" fill="#111"/><rect x="713" y="6" width="1" height="2" fill="#111"/><rect x="718" y="6" width="1" height="2" fill="#111"/><rect x="723" y="6" width="1" height="2" fill="#111"/><rect x="728" y="6" width="1" height="2" fill="#111"/><rect x="732" y="5" width="1" height="4" fill="#111"/><rect x="737" y="6" width="1" height="2" fill="#111"/><rect x="742" y="6" width="1" height="2" fill="#111"/><rect x="746" y="6" width="1" height="2" fill="#111"/><rect x="751" y="6" width="1" height="2" fill="#111"/><rect x="761" y="6" width="1" height="2" fill="#111"/><rect x="765" y="6" width="1" height="2" fill="#111"/><rect x="770" y="6" width="1" height="2" fill="#111"/><rect x="775" y="6" width="1" height="2" fill="#111"/><rect x="780" y="5" width="1" height="4" fill="#111"/><rect x="784" y="6" width="1" height="2" fill="#111"/><rect x="789" y="6" width="1" height="2" fill="#111"/><rect x="794" y="6" width="1" height="2" fill="#111"/><rect x="798" y="6" width="1" height="2" fill="#111"/><rect x="808" y="6" width="1" height="2" fill="#111"/><rect x="813" y="6" width="1" height="2" fill="#111"/><rect x="817" y="6" width="1" height="2" fill="#111"/><rect x="822" y="6" width="1" height="2" fill="#111"/><rect x="827" y="5" width="1" height="4" fill="#111"/><rect x="831" y="6" width="1" height="2" fill="#111"/><rect x="836" y="6" width="1" height="2" fill="#111"/><rect x="841" y="6" width="1" height="2" fill="#111"/><rect x="846" y="6" width="1" height="2" fill="#111"/><rect x="855" y="6" width="1" height="2" fill="#111"/><rect x="860" y="6" width="1" height="2" fill="#111"/><rect x="865" y="6" width="1" height="2" fill="#111"/><rect x="869" y="6" width="1" height="2" fill="#111"/><rect x="874" y="5" width="1" height="4" fill="#111"/><rect x="879" y="6" width="1" height="2" fill="#111"/><rect x="883" y="6" width="1" height="2" fill="#111"/><rect x="888" y="6" width="1" height="2" fill="#111"/><rect x="893" y="6" width="1" height="2" fill="#111"/><rect x="902" y="6" width="1" height="2" fill="#111"/><rect x="907" y="6" width="1" height="2" fill="#111"/><rect x="912" y="6" width="1" height="2" fill="#111"/><rect x="917" y="6" width="1" height="2" fill="#111"/><rect x="921" y="5" width="1" height="4" fill="#111"/><rect x="926" y="6" width="1" height="2" fill="#111"/><rect x="931" y="6" width="1" height="2" fill="#111"/><rect x="935" y="6" width="1" height="2" fill="#111"/><rect x="940" y="6" width="1" height="2" fill="#111"/></svg>
<div class="a" style="left:314px;top:103px;width:945px;height:14px;overflow:hidden">
<div class="t" style="left:44.94409448818898px;top:3.25px;font-size:8.5px;color:#111;letter-spacing:-0.6px;">10</div>
<div class="t" style="left:92.18818897637796px;top:3.25px;font-size:8.5px;color:#111;letter-spacing:-0.6px;">20</div>
<div class="t" style="left:139.43228346456692px;top:3.25px;font-size:8.5px;color:#111;letter-spacing:-0.6px;">30</div>
<div class="t" style="left:186.6763779527559px;top:3.25px;font-size:8.5px;color:#111;letter-spacing:-0.6px;">40</div>
<div class="t" style="left:233.9204724409449px;top:3.25px;font-size:8.5px;color:#111;letter-spacing:-0.6px;">50</div>
<div class="t" style="left:281.16456692913385px;top:3.25px;font-size:8.5px;color:#111;letter-spacing:-0.6px;">60</div>
<div class="t" style="left:328.40866141732283px;top:3.25px;font-size:8.5px;color:#111;letter-spacing:-0.6px;">70</div>
<div class="t" style="left:375.6527559055118px;top:3.25px;font-size:8.5px;color:#111;letter-spacing:-0.6px;">80</div>
<div class="t" style="left:422.89685039370084px;top:3.25px;font-size:8.5px;color:#111;letter-spacing:-0.6px;">90</div>
<div class="t" style="left:468.04094488188986px;top:3.25px;font-size:8.5px;color:#111;letter-spacing:-0.6px;">100</div>
<div class="t" style="left:515.2850393700788px;top:3.25px;font-size:8.5px;color:#111;letter-spacing:-0.6px;">110</div>
<div class="t" style="left:562.5291338582678px;top:3.25px;font-size:8.5px;color:#111;letter-spacing:-0.6px;">120</div>
<div class="t" style="left:609.7732283464568px;top:3.25px;font-size:8.5px;color:#111;letter-spacing:-0.6px;">130</div>
<div class="t" style="left:657.0173228346457px;top:3.25px;font-size:8.5px;color:#111;letter-spacing:-0.6px;">140</div>
<div class="t" style="left:704.2614173228347px;top:3.25px;font-size:8.5px;color:#111;letter-spacing:-0.6px;">150</div>
<div class="t" style="left:751.5055118110237px;top:3.25px;font-size:8.5px;color:#111;letter-spacing:-0.6px;">160</div>
<div class="t" style="left:798.7496062992127px;top:3.25px;font-size:8.5px;color:#111;letter-spacing:-0.6px;">170</div>
<div class="t" style="left:845.9937007874017px;top:3.25px;font-size:8.5px;color:#111;letter-spacing:-0.6px;">180</div>
<div class="t" style="left:893.2377952755907px;top:3.25px;font-size:8.5px;color:#111;letter-spacing:-0.6px;">190</div>
<div class="t" style="left:940.4818897637797px;top:3.25px;font-size:8.5px;color:#111;letter-spacing:-0.6px;">200</div>
</div>
<svg class="a" style="left:296px;top:107px;shape-rendering:auto" width="6" height="9" viewBox="0 0 6 9" shape-rendering="crispEdges"><path d="M5 0v9L0 4.5z" fill="#2a9ae0"/></svg>
<svg class="a" style="left:303px;top:107px;shape-rendering:auto" width="6" height="9" viewBox="0 0 6 9" shape-rendering="crispEdges"><path d="M0 0v9L6 4.5z" fill="#2a9ae0"/></svg>
<div class="a" style="left:314px;top:122px;width:929px;height:601px;background:#fff;"></div>
<svg class="a" style="left:314px;top:122px" width="929" height="601" shape-rendering="crispEdges">
<defs><path id="dr" d="M0 0h1v1h-1zM5 0h1v1h-1zM9 0h1v1h-1zM14 0h1v1h-1zM19 0h1v1h-1zM24 0h1v1h-1zM28 0h1v1h-1zM33 0h1v1h-1zM38 0h1v1h-1zM43 0h1v1h-1zM47 0h1v1h-1zM52 0h1v1h-1zM57 0h1v1h-1zM61 0h1v1h-1zM66 0h1v1h-1zM71 0h1v1h-1zM76 0h1v1h-1zM80 0h1v1h-1zM85 0h1v1h-1zM90 0h1v1h-1zM94 0h1v1h-1zM99 0h1v1h-1zM104 0h1v1h-1zM109 0h1v1h-1zM113 0h1v1h-1zM118 0h1v1h-1zM123 0h1v1h-1zM128 0h1v1h-1zM132 0h1v1h-1zM137 0h1v1h-1zM142 0h1v1h-1zM146 0h1v1h-1zM151 0h1v1h-1zM156 0h1v1h-1zM161 0h1v1h-1zM165 0h1v1h-1zM170 0h1v1h-1zM175 0h1v1h-1zM180 0h1v1h-1zM184 0h1v1h-1zM189 0h1v1h-1zM194 0h1v1h-1zM198 0h1v1h-1zM203 0h1v1h-1zM208 0h1v1h-1zM213 0h1v1h-1zM217 0h1v1h-1zM222 0h1v1h-1zM227 0h1v1h-1zM231 0h1v1h-1zM236 0h1v1h-1zM241 0h1v1h-1zM246 0h1v1h-1zM250 0h1v1h-1zM255 0h1v1h-1zM260 0h1v1h-1zM265 0h1v1h-1zM269 0h1v1h-1zM274 0h1v1h-1zM279 0h1v1h-1zM283 0h1v1h-1zM288 0h1v1h-1zM293 0h1v1h-1zM298 0h1v1h-1zM302 0h1v1h-1zM307 0h1v1h-1zM312 0h1v1h-1zM317 0h1v1h-1zM321 0h1v1h-1zM326 0h1v1h-1zM331 0h1v1h-1zM335 0h1v1h-1zM340 0h1v1h-1zM345 0h1v1h-1zM350 0h1v1h-1zM354 0h1v1h-1zM359 0h1v1h-1zM364 0h1v1h-1zM369 0h1v1h-1zM373 0h1v1h-1zM378 0h1v1h-1zM383 0h1v1h-1zM387 0h1v1h-1zM392 0h1v1h-1zM397 0h1v1h-1zM402 0h1v1h-1zM406 0h1v1h-1zM411 0h1v1h-1zM416 0h1v1h-1zM420 0h1v1h-1zM425 0h1v1h-1zM430 0h1v1h-1zM435 0h1v1h-1zM439 0h1v1h-1zM444 0h1v1h-1zM449 0h1v1h-1zM454 0h1v1h-1zM458 0h1v1h-1zM463 0h1v1h-1zM468 0h1v1h-1zM472 0h1v1h-1zM477 0h1v1h-1zM482 0h1v1h-1zM487 0h1v1h-1zM491 0h1v1h-1zM496 0h1v1h-1zM501 0h1v1h-1zM506 0h1v1h-1zM510 0h1v1h-1zM515 0h1v1h-1zM520 0h1v1h-1zM524 0h1v1h-1zM529 0h1v1h-1zM534 0h1v1h-1zM539 0h1v1h-1zM543 0h1v1h-1zM548 0h1v1h-1zM553 0h1v1h-1zM557 0h1v1h-1zM562 0h1v1h-1zM567 0h1v1h-1zM572 0h1v1h-1zM576 0h1v1h-1zM581 0h1v1h-1zM586 0h1v1h-1zM591 0h1v1h-1zM595 0h1v1h-1zM600 0h1v1h-1zM605 0h1v1h-1zM609 0h1v1h-1zM614 0h1v1h-1zM619 0h1v1h-1zM624 0h1v1h-1zM628 0h1v1h-1zM633 0h1v1h-1zM638 0h1v1h-1zM643 0h1v1h-1zM647 0h1v1h-1zM652 0h1v1h-1zM657 0h1v1h-1zM661 0h1v1h-1zM666 0h1v1h-1zM671 0h1v1h-1zM676 0h1v1h-1zM680 0h1v1h-1zM685 0h1v1h-1zM690 0h1v1h-1zM694 0h1v1h-1zM699 0h1v1h-1zM704 0h1v1h-1zM709 0h1v1h-1zM713 0h1v1h-1zM718 0h1v1h-1zM723 0h1v1h-1zM728 0h1v1h-1zM732 0h1v1h-1zM737 0h1v1h-1zM742 0h1v1h-1zM746 0h1v1h-1zM751 0h1v1h-1zM756 0h1v1h-1zM761 0h1v1h-1zM765 0h1v1h-1zM770 0h1v1h-1zM775 0h1v1h-1zM780 0h1v1h-1zM784 0h1v1h-1zM789 0h1v1h-1zM794 0h1v1h-1zM798 0h1v1h-1zM803 0h1v1h-1zM808 0h1v1h-1zM813 0h1v1h-1zM817 0h1v1h-1zM822 0h1v1h-1zM827 0h1v1h-1zM831 0h1v1h-1zM836 0h1v1h-1zM841 0h1v1h-1zM846 0h1v1h-1zM850 0h1v1h-1zM855 0h1v1h-1zM860 0h1v1h-1zM865 0h1v1h-1zM869 0h1v1h-1zM874 0h1v1h-1zM879 0h1v1h-1zM883 0h1v1h-1zM888 0h1v1h-1zM893 0h1v1h-1zM898 0h1v1h-1zM902 0h1v1h-1zM907 0h1v1h-1zM912 0h1v1h-1zM917 0h1v1h-1zM921 0h1v1h-1zM926 0h1v1h-1z" fill="#b4b4b4"/></defs>
<use href="#dr" y="0"/>
<use href="#dr" y="5"/>
<use href="#dr" y="10"/>
<use href="#dr" y="14"/>
<use href="#dr" y="19"/>
<use href="#dr" y="23"/>
<use href="#dr" y="28"/>
<use href="#dr" y="33"/>
<use href="#dr" y="37"/>
<use href="#dr" y="42"/>
<use href="#dr" y="47"/>
<use href="#dr" y="51"/>
<use href="#dr" y="56"/>
<use href="#dr" y="61"/>
<use href="#dr" y="66"/>
<use href="#dr" y="70"/>
<use href="#dr" y="75"/>
<use href="#dr" y="80"/>
<use href="#dr" y="85"/>
<use href="#dr" y="89"/>
<use href="#dr" y="94"/>
<use href="#dr" y="99"/>
<use href="#dr" y="103"/>
<use href="#dr" y="108"/>
<use href="#dr" y="113"/>
<use href="#dr" y="118"/>
<use href="#dr" y="122"/>
<use href="#dr" y="127"/>
<use href="#dr" y="132"/>
<use href="#dr" y="136"/>
<use href="#dr" y="141"/>
<use href="#dr" y="146"/>
<use href="#dr" y="151"/>
<use href="#dr" y="155"/>
<use href="#dr" y="160"/>
<use href="#dr" y="165"/>
<use href="#dr" y="170"/>
<use href="#dr" y="174"/>
<use href="#dr" y="179"/>
<use href="#dr" y="183"/>
<use href="#dr" y="188"/>
<use href="#dr" y="193"/>
<use href="#dr" y="197"/>
<use href="#dr" y="202"/>
<use href="#dr" y="207"/>
<use href="#dr" y="211"/>
<use href="#dr" y="216"/>
<use href="#dr" y="221"/>
<use href="#dr" y="226"/>
<use href="#dr" y="230"/>
<use href="#dr" y="235"/>
<use href="#dr" y="240"/>
<use href="#dr" y="245"/>
<use href="#dr" y="249"/>
<use href="#dr" y="254"/>
<use href="#dr" y="259"/>
<use href="#dr" y="263"/>
<use href="#dr" y="268"/>
<use href="#dr" y="273"/>
<use href="#dr" y="278"/>
<use href="#dr" y="282"/>
<use href="#dr" y="287"/>
<use href="#dr" y="292"/>
<use href="#dr" y="296"/>
<use href="#dr" y="301"/>
<use href="#dr" y="306"/>
<use href="#dr" y="311"/>
<use href="#dr" y="315"/>
<use href="#dr" y="320"/>
<use href="#dr" y="325"/>
<use href="#dr" y="330"/>
<use href="#dr" y="334"/>
<use href="#dr" y="339"/>
<use href="#dr" y="344"/>
<use href="#dr" y="348"/>
<use href="#dr" y="352"/>
<use href="#dr" y="357"/>
<use href="#dr" y="362"/>
<use href="#dr" y="366"/>
<use href="#dr" y="371"/>
<use href="#dr" y="376"/>
<use href="#dr" y="380"/>
<use href="#dr" y="385"/>
<use href="#dr" y="390"/>
<use href="#dr" y="395"/>
<use href="#dr" y="399"/>
<use href="#dr" y="404"/>
<use href="#dr" y="409"/>
<use href="#dr" y="414"/>
<use href="#dr" y="418"/>
<use href="#dr" y="423"/>
<use href="#dr" y="428"/>
<use href="#dr" y="432"/>
<use href="#dr" y="437"/>
<use href="#dr" y="442"/>
<use href="#dr" y="447"/>
<use href="#dr" y="451"/>
<use href="#dr" y="456"/>
<use href="#dr" y="461"/>
<use href="#dr" y="465"/>
<use href="#dr" y="470"/>
<use href="#dr" y="475"/>
<use href="#dr" y="480"/>
<use href="#dr" y="484"/>
<use href="#dr" y="489"/>
<use href="#dr" y="494"/>
<use href="#dr" y="499"/>
<use href="#dr" y="503"/>
<use href="#dr" y="508"/>
<use href="#dr" y="513"/>
<use href="#dr" y="517"/>
<use href="#dr" y="522"/>
<use href="#dr" y="526"/>
<use href="#dr" y="531"/>
<use href="#dr" y="536"/>
<use href="#dr" y="540"/>
<use href="#dr" y="545"/>
<use href="#dr" y="549"/>
<use href="#dr" y="554"/>
<use href="#dr" y="559"/>
<use href="#dr" y="563"/>
<use href="#dr" y="567"/>
<use href="#dr" y="572"/>
<use href="#dr" y="577"/>
<use href="#dr" y="581"/>
<use href="#dr" y="586"/>
<use href="#dr" y="590"/>
<use href="#dr" y="595"/>
<use href="#dr" y="600"/>
<rect x="0" y="20" width="929" height="3" fill="url(#pck)"/>
<rect x="0" y="180" width="929" height="3" fill="url(#pck)"/>
<rect x="0" y="349" width="929" height="3" fill="url(#pck)"/>
<rect x="0" y="523" width="929" height="3" fill="url(#pck)"/>
<rect x="0" y="546" width="929" height="3" fill="url(#pck)"/>
<rect x="0" y="564" width="929" height="3" fill="url(#pck)"/>
<rect x="0" y="587" width="929" height="3" fill="url(#pck)"/>
</svg>
<svg class="a" style="left:1175px;top:122px;" width="1" height="601" viewBox="0 0 1 601" shape-rendering="crispEdges"><path d="M0 0v601" stroke="#ff0000" stroke-dasharray="2 2"/></svg>
<div class="a" style="left:295px;top:122px;width:14px;height:20px;background:#fff;"></div>
<svg class="a" style="left:295px;top:122px;" width="14" height="20" viewBox="0 0 14 20" shape-rendering="crispEdges"><rect x="6" y="5" width="2" height="1" fill="#111"/><rect x="6" y="9" width="2" height="1" fill="#111"/><rect x="6" y="14" width="2" height="1" fill="#111"/></svg>
<div class="a" style="left:295px;top:122px;width:14px;height:20px;overflow:hidden">
</div>
<div class="a" style="left:295px;top:146px;width:14px;height:156px;background:#fff;"></div>
<svg class="a" style="left:295px;top:146px;" width="14" height="156" viewBox="0 0 14 156" shape-rendering="crispEdges"><rect x="6" y="5" width="2" height="1" fill="#111"/><rect x="6" y="9" width="2" height="1" fill="#111"/><rect x="6" y="14" width="2" height="1" fill="#111"/><rect x="6" y="19" width="2" height="1" fill="#111"/><rect x="5" y="24" width="4" height="1" fill="#111"/><rect x="6" y="28" width="2" height="1" fill="#111"/><rect x="6" y="33" width="2" height="1" fill="#111"/><rect x="6" y="38" width="2" height="1" fill="#111"/><rect x="6" y="43" width="2" height="1" fill="#111"/><rect x="6" y="52" width="2" height="1" fill="#111"/><rect x="6" y="57" width="2" height="1" fill="#111"/><rect x="6" y="61" width="2" height="1" fill="#111"/><rect x="6" y="66" width="2" height="1" fill="#111"/><rect x="5" y="71" width="4" height="1" fill="#111"/><rect x="6" y="76" width="2" height="1" fill="#111"/><rect x="6" y="80" width="2" height="1" fill="#111"/><rect x="6" y="85" width="2" height="1" fill="#111"/><rect x="6" y="90" width="2" height="1" fill="#111"/><rect x="6" y="99" width="2" height="1" fill="#111"/><rect x="6" y="104" width="2" height="1" fill="#111"/><rect x="6" y="109" width="2" height="1" fill="#111"/><rect x="6" y="113" width="2" height="1" fill="#111"/><rect x="5" y="118" width="4" height="1" fill="#111"/><rect x="6" y="123" width="2" height="1" fill="#111"/><rect x="6" y="128" width="2" height="1" fill="#111"/><rect x="6" y="132" width="2" height="1" fill="#111"/><rect x="6" y="137" width="2" height="1" fill="#111"/><rect x="6" y="146" width="2" height="1" fill="#111"/><rect x="6" y="151" width="2" height="1" fill="#111"/></svg>
<div class="a" style="left:295px;top:146px;width:14px;height:156px;overflow:hidden">
<div class="t" style="left:-3px;top:43.2px;font-size:8.5px;width:20px;text-align:center;transform:rotate(-90deg);letter-spacing:-0.6px;color:#111">10</div>
<div class="t" style="left:-3px;top:90.5px;font-size:8.5px;width:20px;text-align:center;transform:rotate(-90deg);letter-spacing:-0.6px;color:#111">20</div>
<div class="t" style="left:-3px;top:137.7px;font-size:8.5px;width:20px;text-align:center;transform:rotate(-90deg);letter-spacing:-0.6px;color:#111">30</div>
</div>
<div class="a" style="left:295px;top:306px;width:14px;height:165px;background:#dcdcdc;"></div>
<svg class="a" style="left:295px;top:306px;" width="14" height="165" viewBox="0 0 14 165" shape-rendering="crispEdges"><rect x="6" y="5" width="2" height="1" fill="#111"/><rect x="6" y="9" width="2" height="1" fill="#111"/><rect x="6" y="14" width="2" height="1" fill="#111"/><rect x="6" y="19" width="2" height="1" fill="#111"/><rect x="5" y="24" width="4" height="1" fill="#111"/><rect x="6" y="28" width="2" height="1" fill="#111"/><rect x="6" y="33" width="2" height="1" fill="#111"/><rect x="6" y="38" width="2" height="1" fill="#111"/><rect x="6" y="43" width="2" height="1" fill="#111"/><rect x="6" y="52" width="2" height="1" fill="#111"/><rect x="6" y="57" width="2" height="1" fill="#111"/><rect x="6" y="61" width="2" height="1" fill="#111"/><rect x="6" y="66" width="2" height="1" fill="#111"/><rect x="5" y="71" width="4" height="1" fill="#111"/><rect x="6" y="76" width="2" height="1" fill="#111"/><rect x="6" y="80" width="2" height="1" fill="#111"/><rect x="6" y="85" width="2" height="1" fill="#111"/><rect x="6" y="90" width="2" height="1" fill="#111"/><rect x="6" y="99" width="2" height="1" fill="#111"/><rect x="6" y="104" width="2" height="1" fill="#111"/><rect x="6" y="109" width="2" height="1" fill="#111"/><rect x="6" y="113" width="2" height="1" fill="#111"/><rect x="5" y="118" width="4" height="1" fill="#111"/><rect x="6" y="123" width="2" height="1" fill="#111"/><rect x="6" y="128" width="2" height="1" fill="#111"/><rect x="6" y="132" width="2" height="1" fill="#111"/><rect x="6" y="137" width="2" height="1" fill="#111"/><rect x="6" y="146" width="2" height="1" fill="#111"/><rect x="6" y="151" width="2" height="1" fill="#111"/><rect x="6" y="156" width="2" height="1" fill="#111"/><rect x="6" y="161" width="2" height="1" fill="#111"/></svg>
<div class="a" style="left:295px;top:306px;width:14px;height:165px;overflow:hidden">
<div class="t" style="left:-3px;top:43.2px;font-size:8.5px;width:20px;text-align:center;transform:rotate(-90deg);letter-spacing:-0.6px;color:#111">10</div>
<div class="t" style="left:-3px;top:90.5px;font-size:8.5px;width:20px;text-align:center;transform:rotate(-90deg);letter-spacing:-0.6px;color:#111">20</div>
<div class="t" style="left:-3px;top:137.7px;font-size:8.5px;width:20px;text-align:center;transform:rotate(-90deg);letter-spacing:-0.6px;color:#111">30</div>
</div>
<div class="a" style="left:295px;top:475px;width:14px;height:170px;background:#fff;"></div>
<svg class="a" style="left:295px;top:475px;" width="14" height="170" viewBox="0 0 14 170" shape-rendering="crispEdges"><rect x="6" y="5" width="2" height="1" fill="#111"/><rect x="6" y="9" width="2" height="1" fill="#111"/><rect x="6" y="14" width="2" height="1" fill="#111"/><rect x="6" y="19" width="2" height="1" fill="#111"/><rect x="5" y="24" width="4" height="1" fill="#111"/><rect x="6" y="28" width="2" height="1" fill="#111"/><rect x="6" y="33" width="2" height="1" fill="#111"/><rect x="6" y="38" width="2" height="1" fill="#111"/><rect x="6" y="43" width="2" height="1" fill="#111"/><rect x="6" y="52" width="2" height="1" fill="#111"/><rect x="6" y="57" width="2" height="1" fill="#111"/><rect x="6" y="61" width="2" height="1" fill="#111"/><rect x="6" y="66" width="2" height="1" fill="#111"/><rect x="5" y="71" width="4" height="1" fill="#111"/><rect x="6" y="76" width="2" height="1" fill="#111"/><rect x="6" y="80" width="2" height="1" fill="#111"/><rect x="6" y="85" width="2" height="1" fill="#111"/><rect x="6" y="90" width="2" height="1" fill="#111"/><rect x="6" y="99" width="2" height="1" fill="#111"/><rect x="6" y="104" width="2" height="1" fill="#111"/><rect x="6" y="109" width="2" height="1" fill="#111"/><rect x="6" y="113" width="2" height="1" fill="#111"/><rect x="5" y="118" width="4" height="1" fill="#111"/><rect x="6" y="123" width="2" height="1" fill="#111"/><rect x="6" y="128" width="2" height="1" fill="#111"/><rect x="6" y="132" width="2" height="1" fill="#111"/><rect x="6" y="137" width="2" height="1" fill="#111"/><rect x="6" y="146" width="2" height="1" fill="#111"/><rect x="6" y="151" width="2" height="1" fill="#111"/><rect x="6" y="156" width="2" height="1" fill="#111"/><rect x="6" y="161" width="2" height="1" fill="#111"/><rect x="5" y="165" width="4" height="1" fill="#111"/></svg>
<div class="a" style="left:295px;top:475px;width:14px;height:170px;overflow:hidden">
<div class="t" style="left:-3px;top:43.2px;font-size:8.5px;width:20px;text-align:center;transform:rotate(-90deg);letter-spacing:-0.6px;color:#111">10</div>
<div class="t" style="left:-3px;top:90.5px;font-size:8.5px;width:20px;text-align:center;transform:rotate(-90deg);letter-spacing:-0.6px;color:#111">20</div>
<div class="t" style="left:-3px;top:137.7px;font-size:8.5px;width:20px;text-align:center;transform:rotate(-90deg);letter-spacing:-0.6px;color:#111">30</div>
</div>
<div class="a" style="left:295px;top:649px;width:14px;height:19px;background:#fff;"></div>
<svg class="a" style="left:295px;top:649px;" width="14" height="19" viewBox="0 0 14 19" shape-rendering="crispEdges"><rect x="6" y="5" width="2" height="1" fill="#111"/><rect x="6" y="9" width="2" height="1" fill="#111"/><rect x="6" y="14" width="2" height="1" fill="#111"/></svg>
<div class="a" style="left:295px;top:649px;width:14px;height:19px;overflow:hidden">
</div>
<div class="a" style="left:295px;top:672px;width:14px;height:15px;background:#fff;"></div>
<svg class="a" style="left:295px;top:672px;" width="14" height="15" viewBox="0 0 14 15" shape-rendering="crispEdges"><rect x="6" y="5" width="2" height="1" fill="#111"/><rect x="6" y="9" width="2" height="1" fill="#111"/></svg>
<div class="a" style="left:295px;top:672px;width:14px;height:15px;overflow:hidden">
</div>
<div class="a" style="left:295px;top:690px;width:14px;height:20px;background:#fff;"></div>
<svg class="a" style="left:295px;top:690px;" width="14" height="20" viewBox="0 0 14 20" shape-rendering="crispEdges"><rect x="6" y="5" width="2" height="1" fill="#111"/><rect x="6" y="9" width="2" height="1" fill="#111"/><rect x="6" y="14" width="2" height="1" fill="#111"/></svg>
<div class="a" style="left:295px;top:690px;width:14px;height:20px;overflow:hidden">
</div>
<div class="a" style="left:295px;top:713px;width:14px;height:19px;background:#fff;"></div>
<svg class="a" style="left:295px;top:713px;" width="14" height="19" viewBox="0 0 14 19" shape-rendering="crispEdges"><rect x="6" y="5" width="2" height="1" fill="#111"/><rect x="6" y="9" width="2" height="1" fill="#111"/><rect x="6" y="14" width="2" height="1" fill="#111"/></svg>
<div class="a" style="left:295px;top:713px;width:14px;height:19px;overflow:hidden">
</div>
<div class="a" style="left:295px;top:736px;width:14px;height:3px;background:#fff;"></div>
<svg class="a" style="left:295px;top:736px;" width="14" height="3" viewBox="0 0 14 3" shape-rendering="crispEdges"></svg>
<div class="a" style="left:295px;top:736px;width:14px;height:3px;overflow:hidden">
</div>
<svg class="a" style="left:314px;top:145px;" width="143" height="67" viewBox="0 0 143 67" shape-rendering="crispEdges"><path d="M0 0h5v1h-4v4h-1z M138 0h5v5h-1v-4h-4z M0 62h1v4h4v1h-5z M142 62h1v5h-5v-1h4z" fill="#111"/></svg>
<svg class="a" style="left:318px;top:148px;" width="15" height="14" viewBox="0 0 15 14" shape-rendering="crispEdges"><rect x="0.5" y="0.5" width="14" height="13" fill="#f0f0f0" stroke="#333"/><path d="M1 13v-4l4-4 4 4 2-2 3 3v3z" fill="#2a9ae0"/><rect x="10" y="3" width="2" height="2" fill="#e08a2c"/></svg>
<svg class="a" style="left:843px;top:145px;" width="333" height="20" viewBox="0 0 333 20" shape-rendering="crispEdges"><path d="M0 0h5v1h-4v4h-1z M328 0h5v5h-1v-4h-4z M0 15h1v4h4v1h-5z M332 15h1v5h-5v-1h4z" fill="#111"/></svg>
<div class="t" style="right:750px;top:147.88px;font-size:13.4px;color:#111;">[Format([InvHdr.lblPageOf],[Page],[TotalPages])]</div>
<svg class="a" style="left:314px;top:220px;" width="606" height="35" viewBox="0 0 606 35" shape-rendering="crispEdges"><path d="M0 0h5v1h-4v4h-1z M601 0h5v5h-1v-4h-4z M0 30h1v4h4v1h-5z M605 30h1v5h-5v-1h4z" fill="#111"/></svg>
<div class="t" style="left:318.5px;top:222.68px;font-size:27.5px;color:#111;font-weight:bold;">[CopyLoop.SalesInvoiceTitle]</div>
<svg class="a" style="left:924px;top:173px;" width="252" height="129" viewBox="0 0 252 129" shape-rendering="crispEdges"><path d="M0 0h5v1h-4v4h-1z M247 0h5v5h-1v-4h-4z M0 124h1v4h4v1h-5z M251 124h1v5h-5v-1h4zM0 10h1v4h4v1h-4v4h-1zM0 24h1v4h4v1h-4v4h-1zM0 39h1v4h4v1h-4v4h-1zM0 53h1v4h4v1h-4v4h-1zM0 67h1v4h4v1h-4v4h-1zM0 81h1v4h4v1h-4v4h-1zM0 96h1v4h4v1h-4v4h-1zM0 110h1v4h4v1h-4v4h-1zM251 7h1v9h-1v-4h-4v-1h4zM251 21h1v9h-1v-4h-4v-1h4zM251 35h1v9h-1v-4h-4v-1h4zM251 50h1v9h-1v-4h-4v-1h4zM251 64h1v9h-1v-4h-4v-1h4zM251 81h1v9h-1v-4h-4v-1h4zM251 95h1v9h-1v-4h-4v-1h4zM251 110h1v9h-1v-4h-4v-1h4z" fill="#111"/></svg>
<div class="t" style="right:749px;top:175.46px;font-size:12.1px;color:#111;">[InvHdr.CompanyAddr1]</div>
<div class="t" style="right:749px;top:189.46px;font-size:12.1px;color:#111;">[InvHdr.CompanyAddr2]</div>
<div class="t" style="right:749px;top:203.96px;font-size:12.1px;color:#111;">[InvHdr.CompanyAddr3]</div>
<div class="t" style="right:749px;top:217.96px;font-size:12.1px;color:#111;">[InvHdr.CompanyAddr4]</div>
<div class="t" style="right:749px;top:231.96px;font-size:12.1px;color:#111;">[InvHdr.CompanyAddr5]</div>
<div class="t" style="right:749px;top:245.46px;font-size:12.1px;color:#111;">[InvHdr.lblPhoneNo]</div>
<div class="t" style="right:749px;top:259.96px;font-size:12.1px;color:#111;">[InvHdr.lblFaxNo] [InvHdr.CompanyFaxNo]</div>
<div class="t" style="right:749px;top:273.96px;font-size:12.1px;color:#111;">[InvHdr.lblEmail] [InvHdr.CompanyEMail]</div>
<div class="t" style="right:749px;top:286.96px;font-size:12.1px;color:#111;">[InvHdr.lblHomePage]</div>
<svg class="a" style="left:342px;top:324px;" width="403" height="20" viewBox="0 0 403 20" shape-rendering="crispEdges"><path d="M0 0h5v1h-4v4h-1z M398 0h5v5h-1v-4h-4z M0 15h1v4h4v1h-5z M402 15h1v5h-5v-1h4z" fill="#111"/></svg>
<div class="t" style="left:347.3px;top:325.04px;font-size:13.2px;color:#111;font-weight:bold;">[InvHdr.lblBillToAddress]</div>
<svg class="a" style="left:773px;top:324px;" width="403" height="20" viewBox="0 0 403 20" shape-rendering="crispEdges"><path d="M0 0h5v1h-4v4h-1z M398 0h5v5h-1v-4h-4z M0 15h1v4h4v1h-5z M402 15h1v5h-5v-1h4z" fill="#111"/></svg>
<div class="t" style="left:777.3px;top:325.04px;font-size:13.2px;color:#111;font-weight:bold;">[InvHdr.lblShipToAddress]</div>
<svg class="a" style="left:342px;top:357px;" width="403" height="114" viewBox="0 0 403 114" shape-rendering="crispEdges"><path d="M0 0h5v1h-4v4h-1z M398 0h5v5h-1v-4h-4z M0 109h1v4h4v1h-5z M402 109h1v5h-5v-1h4zM0 15h1v4h4v1h-4v4h-1zM0 34h1v4h4v1h-4v4h-1zM0 53h1v4h4v1h-4v4h-1zM0 72h1v4h4v1h-4v4h-1zM0 91h1v4h4v1h-4v4h-1zM402 15h1v9h-1v-4h-4v-1h4zM402 34h1v9h-1v-4h-4v-1h4zM402 53h1v9h-1v-4h-4v-1h4zM402 72h1v9h-1v-4h-4v-1h4zM402 91h1v9h-1v-4h-4v-1h4z" fill="#111"/></svg>
<svg class="a" style="left:773px;top:357px;" width="403" height="114" viewBox="0 0 403 114" shape-rendering="crispEdges"><path d="M0 0h5v1h-4v4h-1z M398 0h5v5h-1v-4h-4z M0 109h1v4h4v1h-5z M402 109h1v5h-5v-1h4zM0 15h1v4h4v1h-4v4h-1zM0 34h1v4h4v1h-4v4h-1zM0 53h1v4h4v1h-4v4h-1zM0 72h1v4h4v1h-4v4h-1zM0 91h1v4h4v1h-4v4h-1zM402 15h1v9h-1v-4h-4v-1h4zM402 34h1v9h-1v-4h-4v-1h4zM402 53h1v9h-1v-4h-4v-1h4zM402 72h1v9h-1v-4h-4v-1h4zM402 91h1v9h-1v-4h-4v-1h4z" fill="#111"/></svg>
<div class="t" style="left:347.5px;top:358.43px;font-size:13.333px;color:#111;">[InvHdr.CustAddr1]</div>
<div class="t" style="left:777.5px;top:358.43px;font-size:13.333px;color:#111;">[InvHdr.ShipToAddr1]</div>
<div class="t" style="left:347.5px;top:377.43px;font-size:13.333px;color:#111;">[InvHdr.CustAddr2]</div>
<div class="t" style="left:777.5px;top:377.43px;font-size:13.333px;color:#111;">[InvHdr.ShipToAddr2]</div>
<div class="t" style="left:347.5px;top:396.43px;font-size:13.333px;color:#111;">[InvHdr.CustAddr3]</div>
<div class="t" style="left:777.5px;top:396.43px;font-size:13.333px;color:#111;">[InvHdr.ShipToAddr3]</div>
<div class="t" style="left:347.5px;top:415.43px;font-size:13.333px;color:#111;">[InvHdr.CustAddr4]</div>
<div class="t" style="left:777.5px;top:415.43px;font-size:13.333px;color:#111;">[InvHdr.ShipToAddr4]</div>
<div class="t" style="left:347.5px;top:434.43px;font-size:13.333px;color:#111;">[InvHdr.CustAddr5]</div>
<div class="t" style="left:777.5px;top:434.43px;font-size:13.333px;color:#111;">[InvHdr.ShipToAddr5]</div>
<div class="t" style="left:347.5px;top:452.93px;font-size:13.333px;color:#111;">[InvHdr.CustAddr6]</div>
<div class="t" style="left:777.5px;top:452.93px;font-size:13.333px;color:#111;">[InvHdr.ShipToAddr6]</div>
<svg class="a" style="left:743px;top:303px;" width="5" height="5" viewBox="0 0 5 5" shape-rendering="crispEdges"><rect x="0.5" y="0.5" width="4" height="4" fill="#fff" stroke="#ff0000"/></svg>
<svg class="a" style="left:743px;top:471px;" width="5" height="5" viewBox="0 0 5 5" shape-rendering="crispEdges"><rect x="0.5" y="0.5" width="4" height="4" fill="#fff" stroke="#ff0000"/></svg>
<div class="t" style="left:318.8px;top:532.73px;font-size:13.333px;color:#111;">[InvHdr.lblInvoiceNo]</div>
<div class="t" style="left:318.8px;top:551.73px;font-size:13.333px;color:#111;">[InvHdr.lblDocumentDa</div>
<div class="t" style="left:318.8px;top:570.73px;font-size:13.333px;color:#111;">[InvHdr.lblOrderNo]</div>
<div class="t" style="left:318.8px;top:589.73px;font-size:13.333px;color:#111;">[InvHdr.lblInvoiceDate]</div>
<div class="t" style="left:318.8px;top:608.43px;font-size:13.333px;color:#111;">[InvHdr.lblDueDate]</div>
<div class="t" style="left:318.8px;top:626.43px;font-size:13.333px;color:#111;">[InvHdr.lblPricesInclVA</div>
<div class="t" style="left:469.7px;top:532.73px;font-size:13.333px;color:#111;">[InvHdr.DocumentNo]</div>
<div class="t" style="left:469.7px;top:551.73px;font-size:13.333px;color:#111;">[InvHdr.DocumentDate]</div>
<div class="t" style="left:469.7px;top:570.73px;font-size:13.333px;color:#111;">[InvHdr.OrderNo]</div>
<div class="t" style="left:469.7px;top:589.73px;font-size:13.333px;color:#111;">[InvHdr.PostingDate]</div>
<div class="t" style="left:469.7px;top:608.43px;font-size:13.333px;color:#111;">[InvHdr.DueDate]</div>
<div class="t" style="left:469.7px;top:626.43px;font-size:13.333px;color:#111;">[InvHdr.PricesInclVATYesNo]</div>
<div class="t" style="left:748.8px;top:532.73px;font-size:13.333px;color:#111;">[InvHdr.lblBillToCustom</div>
<div class="t" style="left:748.8px;top:551.73px;font-size:13.333px;color:#111;">[InvHdr.lblVATRegistrat</div>
<div class="t" style="left:748.8px;top:570.73px;font-size:13.333px;color:#111;">[InvHdr.lblYourReferen</div>
<div class="t" style="left:748.8px;top:589.73px;font-size:13.333px;color:#111;">[InvHdr.lblPaymentTer</div>
<div class="t" style="left:748.8px;top:608.43px;font-size:13.333px;color:#111;">[InvHdr.lblShipmentMe</div>
<div class="t" style="left:748.8px;top:626.43px;font-size:13.333px;color:#111;">[InvHdr.lblSalesPerson</div>
<div class="t" style="left:899.7px;top:532.73px;font-size:13.333px;color:#111;">[InvHdr.BilltoCustNo]</div>
<div class="t" style="left:899.7px;top:551.73px;font-size:13.333px;color:#111;">[InvHdr.VATRegNo]</div>
<div class="t" style="left:899.7px;top:570.73px;font-size:13.333px;color:#111;">[InvHdr.YourReference]</div>
<div class="t" style="left:899.7px;top:589.73px;font-size:13.333px;color:#111;">[InvHdr.PaymentTermsDesc]</div>
<div class="t" style="left:899.7px;top:608.43px;font-size:13.333px;color:#111;">[InvHdr.ShipmentMethodDesc]</div>
<div class="t" style="left:899.7px;top:626.43px;font-size:13.333px;color:#111;">[InvHdr.SalesPurchPersonName]</div>
<svg class="a" style="left:314px;top:531px;" width="6" height="114" viewBox="0 0 6 114" shape-rendering="crispEdges"><path d="M0 0h5v1h-4v4h-1z M0 109h1v4h4v1h-5zM0 15h1v4h4v1h-4v4h-1zM0 34h1v4h4v1h-4v4h-1zM0 53h1v4h4v1h-4v4h-1zM0 71h1v4h4v1h-4v4h-1zM0 90h1v4h4v1h-4v4h-1z" fill="#111"/></svg>
<svg class="a" style="left:461px;top:531px;" width="9" height="5" viewBox="0 0 9 5" shape-rendering="crispEdges"><path d="M0 0h9v1h-4v4h-1v-4h-4z" fill="#111"/></svg>
<svg class="a" style="left:461px;top:640px;" width="9" height="5" viewBox="0 0 9 5" shape-rendering="crispEdges"><path d="M4 0h1v4h4v1h-9v-1h4z" fill="#111"/></svg>
<svg class="a" style="left:461px;top:546px;" width="9" height="9" viewBox="0 0 9 9" shape-rendering="crispEdges"><path d="M4 0h1v4h4v1h-4v4h-1v-4h-4v-1h4z" fill="#111"/></svg>
<svg class="a" style="left:461px;top:565px;" width="9" height="9" viewBox="0 0 9 9" shape-rendering="crispEdges"><path d="M4 0h1v4h4v1h-4v4h-1v-4h-4v-1h4z" fill="#111"/></svg>
<svg class="a" style="left:461px;top:584px;" width="9" height="9" viewBox="0 0 9 9" shape-rendering="crispEdges"><path d="M4 0h1v4h4v1h-4v4h-1v-4h-4v-1h4z" fill="#111"/></svg>
<svg class="a" style="left:461px;top:602px;" width="9" height="9" viewBox="0 0 9 9" shape-rendering="crispEdges"><path d="M4 0h1v4h4v1h-4v4h-1v-4h-4v-1h4z" fill="#111"/></svg>
<svg class="a" style="left:461px;top:621px;" width="9" height="9" viewBox="0 0 9 9" shape-rendering="crispEdges"><path d="M4 0h1v4h4v1h-4v4h-1v-4h-4v-1h4z" fill="#111"/></svg>
<svg class="a" style="left:740px;top:531px;" width="9" height="5" viewBox="0 0 9 5" shape-rendering="crispEdges"><path d="M0 0h9v1h-4v4h-1v-4h-4z" fill="#111"/></svg>
<svg class="a" style="left:740px;top:640px;" width="9" height="5" viewBox="0 0 9 5" shape-rendering="crispEdges"><path d="M4 0h1v4h4v1h-9v-1h4z" fill="#111"/></svg>
<svg class="a" style="left:740px;top:546px;" width="9" height="9" viewBox="0 0 9 9" shape-rendering="crispEdges"><path d="M4 0h1v4h4v1h-4v4h-1v-4h-4v-1h4z" fill="#111"/></svg>
<svg class="a" style="left:740px;top:565px;" width="9" height="9" viewBox="0 0 9 9" shape-rendering="crispEdges"><path d="M4 0h1v4h4v1h-4v4h-1v-4h-4v-1h4z" fill="#111"/></svg>
<svg class="a" style="left:740px;top:584px;" width="9" height="9" viewBox="0 0 9 9" shape-rendering="crispEdges"><path d="M4 0h1v4h4v1h-4v4h-1v-4h-4v-1h4z" fill="#111"/></svg>
<svg class="a" style="left:740px;top:602px;" width="9" height="9" viewBox="0 0 9 9" shape-rendering="crispEdges"><path d="M4 0h1v4h4v1h-4v4h-1v-4h-4v-1h4z" fill="#111"/></svg>
<svg class="a" style="left:740px;top:621px;" width="9" height="9" viewBox="0 0 9 9" shape-rendering="crispEdges"><path d="M4 0h1v4h4v1h-4v4h-1v-4h-4v-1h4z" fill="#111"/></svg>
<svg class="a" style="left:891px;top:531px;" width="9" height="5" viewBox="0 0 9 5" shape-rendering="crispEdges"><path d="M0 0h9v1h-4v4h-1v-4h-4z" fill="#111"/></svg>
<svg class="a" style="left:891px;top:640px;" width="9" height="5" viewBox="0 0 9 5" shape-rendering="crispEdges"><path d="M4 0h1v4h4v1h-9v-1h4z" fill="#111"/></svg>
<svg class="a" style="left:891px;top:546px;" width="9" height="9" viewBox="0 0 9 9" shape-rendering="crispEdges"><path d="M4 0h1v4h4v1h-4v4h-1v-4h-4v-1h4z" fill="#111"/></svg>
<svg class="a" style="left:891px;top:565px;" width="9" height="9" viewBox="0 0 9 9" shape-rendering="crispEdges"><path d="M4 0h1v4h4v1h-4v4h-1v-4h-4v-1h4z" fill="#111"/></svg>
<svg class="a" style="left:891px;top:584px;" width="9" height="9" viewBox="0 0 9 9" shape-rendering="crispEdges"><path d="M4 0h1v4h4v1h-4v4h-1v-4h-4v-1h4z" fill="#111"/></svg>
<svg class="a" style="left:891px;top:602px;" width="9" height="9" viewBox="0 0 9 9" shape-rendering="crispEdges"><path d="M4 0h1v4h4v1h-4v4h-1v-4h-4v-1h4z" fill="#111"/></svg>
<svg class="a" style="left:891px;top:621px;" width="9" height="9" viewBox="0 0 9 9" shape-rendering="crispEdges"><path d="M4 0h1v4h4v1h-4v4h-1v-4h-4v-1h4z" fill="#111"/></svg>
<svg class="a" style="left:1171px;top:531px;" width="5" height="114" viewBox="0 0 5 114" shape-rendering="crispEdges"><path d="M0 0h5v5h-1v-4h-4z M4 109h1v5h-5v-1h4zM4 15h1v9h-1v-4h-4v-1h4zM4 34h1v9h-1v-4h-4v-1h4zM4 53h1v9h-1v-4h-4v-1h4zM4 71h1v9h-1v-4h-4v-1h4zM4 90h1v9h-1v-4h-4v-1h4z" fill="#111"/></svg>
<svg class="a" style="left:314px;top:690px;" width="862" height="18" viewBox="0 0 862 18" shape-rendering="crispEdges"><path d="M0 0h5v1h-4v4h-1z M857 0h5v5h-1v-4h-4z M0 13h1v4h4v1h-5z M861 13h1v5h-5v-1h4z" fill="#111"/></svg>
<div class="t" style="left:319.5px;top:690.93px;font-size:13.333px;color:#111;">[HdrComment.Comment_2]</div>
<div class="a" style="left:1243px;top:122px;width:16px;height:601px;background:#fff;"></div>
<svg class="a" style="left:1247px;top:128px;" width="9" height="5" viewBox="0 0 9 5" shape-rendering="crispEdges"><path d="M4 0h1v1h1v1h1v1h1v1h1v1h-9v-1h1v-1h1v-1h1v-1h1z" fill="#777"/></svg>
<div class="a" style="left:1245px;top:141px;width:13px;height:186px;background:#77777a;"></div>
<svg class="a" style="left:1247px;top:712px;" width="9" height="5" viewBox="0 0 9 5" shape-rendering="crispEdges"><path d="M0 0h9v1h-1v1h-1v1h-1v1h-1v1h-1v-1h-1v-1h-1v-1h-1v-1h-1z" fill="#777"/></svg>
<div class="a" style="left:314px;top:723px;width:929px;height:16px;background:#fff;"></div>
<svg class="a" style="left:321px;top:727px;" width="5" height="9" viewBox="0 0 5 9" shape-rendering="crispEdges"><path d="M4 0h1v9h-1v-1h-1v-1h-1v-1h-1v-1h-1v-1h1v-1h1v-1h1v-1h1z" fill="#777"/></svg>
<div class="a" style="left:333px;top:725px;width:192px;height:13px;background:#77777a;"></div>
<svg class="a" style="left:1231px;top:727px;" width="5" height="9" viewBox="0 0 5 9" shape-rendering="crispEdges"><path d="M0 0h1v1h1v1h1v1h1v1h1v1h-1v1h-1v1h-1v1h-1z" fill="#777"/></svg>
<div class="a" style="left:1243px;top:723px;width:16px;height:16px;background:#a9a9a9;"></div>
<div class="a" style="left:1259px;top:98px;width:3px;height:666px;background:#dfdfe3;"></div>
<div class="a" style="left:1262px;top:98px;width:657px;height:352px;background:#eeeef2;"></div>
<div class="t" style="left:1267px;top:102.84px;font-size:10.8px;color:#9c9ca8;">Data</div>
<svg class="a" style="left:1302px;top:106px;" width="584" height="5" viewBox="0 0 584 5" shape-rendering="crispEdges"><rect x="0" y="0" width="584" height="5" fill="url(#pgr)"/></svg>
<svg class="a" style="left:1889px;top:104px;" width="8" height="9" viewBox="0 0 8 9" shape-rendering="crispEdges"><path d="M2 0h4v5h2v1h-3v3h-1v-3h-3v-1h1z M3 1v4h1v-4z" fill="#6a6a72" fill-rule="evenodd"/></svg>
<svg class="a" style="left:1907px;top:105px;" width="8" height="8" viewBox="0 0 8 8"><path d="M0.5 0.5l7 7M7.5 0.5l-7 7" stroke="#6a6a72" stroke-width="1.3"/></svg>
<div class="t" style="left:1268px;top:124.54px;font-size:10.8px;color:#111;">Actions</div>
<svg class="a" style="left:1315px;top:129px;" width="5" height="3" viewBox="0 0 5 3" shape-rendering="crispEdges"><path d="M0 0h5v1h-1v1h-1v1h-1v-1h-1v-1h-1z" fill="#222"/></svg>
<svg class="a" style="left:1330px;top:123px;shape-rendering:auto" width="14" height="14" viewBox="0 0 14 14" shape-rendering="crispEdges"><path d="M4.5 5.5h6l3 3v5h-9z" fill="none" stroke="#a0a0a0"/><path d="M1 1l6 5" stroke="#a0a0a0" stroke-width="2"/></svg>
<svg class="a" style="left:1354px;top:123px;shape-rendering:auto" width="14" height="14" viewBox="0 0 14 14" shape-rendering="crispEdges"><path d="M0.5 0.5h6l2 2v8h-8z" fill="none" stroke="#a0a0a0"/><path d="M4.5 4.5h6l3 3v6h-9z" fill="#eeeef2" stroke="#a0a0a0"/></svg>
<svg class="a" style="left:1379px;top:124px;" width="11" height="11" viewBox="0 0 11 11"><path d="M1 1l9 9M10 1l-9 9" stroke="#8a8a8a" stroke-width="1.6"/></svg>
<svg class="a" style="left:1401px;top:122px;shape-rendering:auto" width="14" height="14" viewBox="0 0 14 14" shape-rendering="crispEdges"><rect x="4.5" y="0.5" width="9" height="7" fill="#eeeef2" stroke="#a0a0a0"/><path d="M6 3h6M6 5h6" stroke="#a0a0a0"/><circle cx="4" cy="9" r="3" fill="none" stroke="#a0a0a0"/><path d="M2 11l-2 2" stroke="#a0a0a0"/></svg>
<svg class="a" style="left:1425px;top:125px;" width="12" height="8" viewBox="0 0 12 8"><path d="M1 7l5-5 5 5" fill="none" stroke="#444" stroke-width="1.4"/></svg>
<svg class="a" style="left:1449px;top:125px;" width="12" height="8" viewBox="0 0 12 8"><path d="M1 1l5 5 5-5" fill="none" stroke="#444" stroke-width="1.4"/></svg>
<div class="a" style="left:1262px;top:143px;width:657px;height:21px;background:#fff;border-top:1px solid #a0a0a0;border-bottom:1px solid #a0a0a0;border-left:1px solid #a0a0a0;"></div>
<div class="a" style="left:1900px;top:144px;width:19px;height:19px;background:#f0f0f0;"></div>
<svg class="a" style="left:1901px;top:146px;" width="16" height="16" viewBox="0 0 16 16"><circle cx="10.5" cy="5.5" r="4.3" fill="none" stroke="#333" stroke-width="1.2"/><path d="M7.5 8.5L1.5 14.5" stroke="#333" stroke-width="1.3"/></svg>
<div class="a" style="left:1262px;top:164px;width:642px;height:258px;background:#fff;"></div>
<div class="a" style="left:1904px;top:164px;width:15px;height:258px;background:#f0f0f0;"></div>
<div class="a" style="left:1911px;top:181px;width:2px;height:30px;background:#868686;"></div>
<svg class="a" style="left:1273px;top:178px;" width="1" height="244" viewBox="0 0 1 244" shape-rendering="crispEdges"><rect x="0" y="0" width="1" height="244" fill="url(#pdv)"/></svg>
<svg class="a" style="left:1292px;top:179px;" width="1" height="5" viewBox="0 0 1 5" shape-rendering="crispEdges"><rect x="0" y="0" width="1" height="5" fill="url(#pdv)"/></svg>
<svg class="a" style="left:1311px;top:195px;" width="1" height="227" viewBox="0 0 1 227" shape-rendering="crispEdges"><rect x="0" y="0" width="1" height="227" fill="url(#pdv)"/></svg>
<svg class="a" style="left:1330px;top:243px;" width="1" height="179" viewBox="0 0 1 179" shape-rendering="crispEdges"><rect x="0" y="0" width="1" height="179" fill="url(#pdv)"/></svg>
<svg class="a" style="left:1349px;top:307px;" width="1" height="115" viewBox="0 0 1 115" shape-rendering="crispEdges"><rect x="0" y="0" width="1" height="115" fill="url(#pdv)"/></svg>
<svg class="a" style="left:1368px;top:323px;" width="1" height="99" viewBox="0 0 1 99" shape-rendering="crispEdges"><rect x="0" y="0" width="1" height="99" fill="url(#pdv)"/></svg>
<svg class="a" style="left:1269px;top:168px;" width="9" height="9" viewBox="0 0 9 9" shape-rendering="crispEdges"><rect x="0.5" y="0.5" width="8" height="8" fill="#f4f4f4" stroke="#8a8a8a"/><rect x="2" y="4" width="5" height="1" fill="#2a4a9a"/></svg>
<svg class="a" style="left:1279px;top:172px;" width="6" height="1" viewBox="0 0 6 1" shape-rendering="crispEdges"><rect x="0" y="0" width="6" height="1" fill="url(#pdh)"/></svg>
<svg class="a" style="left:1286px;top:165px;" width="11" height="14" viewBox="0 0 11 14"><path d="M0 2.5a5.5 2.5 0 0 1 11 0v9a5.5 2.5 0 0 1 -11 0z" fill="#d9895a"/><ellipse cx="5.5" cy="2.5" rx="4.5" ry="1.6" fill="#f3dcc8"/></svg>
<div class="t" style="left:1304px;top:167.00px;font-size:10.6px;color:#111;">Data Sources</div>
<svg class="a" style="left:1288px;top:184px;" width="9" height="9" viewBox="0 0 9 9" shape-rendering="crispEdges"><rect x="0.5" y="0.5" width="8" height="8" fill="#f4f4f4" stroke="#8a8a8a"/><rect x="2" y="4" width="5" height="1" fill="#2a4a9a"/></svg>
<svg class="a" style="left:1298px;top:188px;" width="6" height="1" viewBox="0 0 6 1" shape-rendering="crispEdges"><rect x="0" y="0" width="6" height="1" fill="url(#pdh)"/></svg>
<svg class="a" style="left:1305px;top:182px;" width="13" height="12" viewBox="0 0 13 12" shape-rendering="crispEdges"><rect x="0" y="0" width="13" height="12" fill="#333"/><rect x="1" y="3" width="3" height="2" fill="#fff"/><rect x="5" y="3" width="3" height="2" fill="#fff"/><rect x="9" y="3" width="3" height="2" fill="#fff"/><rect x="1" y="6" width="3" height="2" fill="#fff"/><rect x="5" y="6" width="3" height="2" fill="#fff"/><rect x="9" y="6" width="3" height="2" fill="#fff"/><rect x="1" y="9" width="3" height="2" fill="#fff"/><rect x="5" y="9" width="3" height="2" fill="#fff"/><rect x="9" y="9" width="3" height="2" fill="#fff"/></svg>
<div class="t" style="left:1323px;top:183.00px;font-size:10.6px;color:#111;">InvHdr</div>
<svg class="a" style="left:1307px;top:200px;" width="9" height="9" viewBox="0 0 9 9" shape-rendering="crispEdges"><rect x="0.5" y="0.5" width="8" height="8" fill="#f4f4f4" stroke="#8a8a8a"/><rect x="2" y="4" width="5" height="1" fill="#2a4a9a"/><rect x="4" y="2" width="1" height="5" fill="#2a4a9a"/></svg>
<svg class="a" style="left:1317px;top:204px;" width="6" height="1" viewBox="0 0 6 1" shape-rendering="crispEdges"><rect x="0" y="0" width="6" height="1" fill="url(#pdh)"/></svg>
<svg class="a" style="left:1324px;top:199px;" width="13" height="10" viewBox="0 0 13 10" shape-rendering="crispEdges"><rect x="0" y="0" width="13" height="10" fill="#333"/><rect x="1" y="1" width="3" height="2" fill="#fff"/><rect x="9" y="1" width="3" height="2" fill="#fff"/><rect x="1" y="4" width="3" height="2" fill="#fff"/><rect x="9" y="4" width="3" height="2" fill="#fff"/><rect x="1" y="7" width="3" height="2" fill="#fff"/><rect x="9" y="7" width="3" height="2" fill="#fff"/><rect x="5" y="1" width="3" height="8" fill="#2a9ae0"/></svg>
<div class="t" style="left:1342px;top:199.00px;font-size:10.6px;color:#111;">Columns</div>
<svg class="a" style="left:1307px;top:216px;" width="9" height="9" viewBox="0 0 9 9" shape-rendering="crispEdges"><rect x="0.5" y="0.5" width="8" height="8" fill="#f4f4f4" stroke="#8a8a8a"/><rect x="2" y="4" width="5" height="1" fill="#2a4a9a"/><rect x="4" y="2" width="1" height="5" fill="#2a4a9a"/></svg>
<svg class="a" style="left:1317px;top:220px;" width="6" height="1" viewBox="0 0 6 1" shape-rendering="crispEdges"><rect x="0" y="0" width="6" height="1" fill="url(#pdh)"/></svg>
<svg class="a" style="left:1324px;top:215px;" width="13" height="10" viewBox="0 0 13 10" shape-rendering="crispEdges"><rect x="0" y="0" width="13" height="10" fill="#333"/><rect x="1" y="1" width="3" height="2" fill="#fff"/><rect x="9" y="1" width="3" height="2" fill="#fff"/><rect x="1" y="4" width="3" height="2" fill="#fff"/><rect x="9" y="4" width="3" height="2" fill="#fff"/><rect x="1" y="7" width="3" height="2" fill="#fff"/><rect x="9" y="7" width="3" height="2" fill="#fff"/><rect x="5" y="1" width="3" height="8" fill="#2a9ae0"/></svg>
<div class="t" style="left:1342px;top:215.00px;font-size:10.6px;color:#111;">Labels</div>
<svg class="a" style="left:1307px;top:232px;" width="9" height="9" viewBox="0 0 9 9" shape-rendering="crispEdges"><rect x="0.5" y="0.5" width="8" height="8" fill="#f4f4f4" stroke="#8a8a8a"/><rect x="2" y="4" width="5" height="1" fill="#2a4a9a"/></svg>
<svg class="a" style="left:1317px;top:236px;" width="6" height="1" viewBox="0 0 6 1" shape-rendering="crispEdges"><rect x="0" y="0" width="6" height="1" fill="url(#pdh)"/></svg>
<svg class="a" style="left:1324px;top:230px;" width="13" height="12" viewBox="0 0 13 12" shape-rendering="crispEdges"><rect x="0" y="0" width="13" height="12" fill="#333"/><rect x="1" y="3" width="3" height="2" fill="#fff"/><rect x="5" y="3" width="3" height="2" fill="#fff"/><rect x="9" y="3" width="3" height="2" fill="#fff"/><rect x="1" y="6" width="3" height="2" fill="#fff"/><rect x="5" y="6" width="3" height="2" fill="#fff"/><rect x="9" y="6" width="3" height="2" fill="#fff"/><rect x="1" y="9" width="3" height="2" fill="#fff"/><rect x="5" y="9" width="3" height="2" fill="#fff"/><rect x="9" y="9" width="3" height="2" fill="#fff"/></svg>
<div class="t" style="left:1342px;top:231.00px;font-size:10.6px;color:#111;">CopyLoop</div>
<svg class="a" style="left:1326px;top:248px;" width="9" height="9" viewBox="0 0 9 9" shape-rendering="crispEdges"><rect x="0.5" y="0.5" width="8" height="8" fill="#f4f4f4" stroke="#8a8a8a"/><rect x="2" y="4" width="5" height="1" fill="#2a4a9a"/><rect x="4" y="2" width="1" height="5" fill="#2a4a9a"/></svg>
<svg class="a" style="left:1336px;top:252px;" width="6" height="1" viewBox="0 0 6 1" shape-rendering="crispEdges"><rect x="0" y="0" width="6" height="1" fill="url(#pdh)"/></svg>
<svg class="a" style="left:1343px;top:247px;" width="13" height="10" viewBox="0 0 13 10" shape-rendering="crispEdges"><rect x="0" y="0" width="13" height="10" fill="#333"/><rect x="1" y="1" width="3" height="2" fill="#fff"/><rect x="9" y="1" width="3" height="2" fill="#fff"/><rect x="1" y="4" width="3" height="2" fill="#fff"/><rect x="9" y="4" width="3" height="2" fill="#fff"/><rect x="1" y="7" width="3" height="2" fill="#fff"/><rect x="9" y="7" width="3" height="2" fill="#fff"/><rect x="5" y="1" width="3" height="8" fill="#2a9ae0"/></svg>
<div class="t" style="left:1361px;top:247.00px;font-size:10.6px;color:#111;">Columns</div>
<svg class="a" style="left:1326px;top:264px;" width="9" height="9" viewBox="0 0 9 9" shape-rendering="crispEdges"><rect x="0.5" y="0.5" width="8" height="8" fill="#f4f4f4" stroke="#8a8a8a"/><rect x="2" y="4" width="5" height="1" fill="#2a4a9a"/><rect x="4" y="2" width="1" height="5" fill="#2a4a9a"/></svg>
<svg class="a" style="left:1336px;top:268px;" width="6" height="1" viewBox="0 0 6 1" shape-rendering="crispEdges"><rect x="0" y="0" width="6" height="1" fill="url(#pdh)"/></svg>
<svg class="a" style="left:1343px;top:262px;" width="13" height="12" viewBox="0 0 13 12" shape-rendering="crispEdges"><rect x="0" y="0" width="13" height="12" fill="#333"/><rect x="1" y="3" width="3" height="2" fill="#fff"/><rect x="5" y="3" width="3" height="2" fill="#fff"/><rect x="9" y="3" width="3" height="2" fill="#fff"/><rect x="1" y="6" width="3" height="2" fill="#fff"/><rect x="5" y="6" width="3" height="2" fill="#fff"/><rect x="9" y="6" width="3" height="2" fill="#fff"/><rect x="1" y="9" width="3" height="2" fill="#fff"/><rect x="5" y="9" width="3" height="2" fill="#fff"/><rect x="9" y="9" width="3" height="2" fill="#fff"/></svg>
<div class="t" style="left:1361px;top:263.00px;font-size:10.6px;color:#111;">HdrComment</div>
<svg class="a" style="left:1326px;top:280px;" width="9" height="9" viewBox="0 0 9 9" shape-rendering="crispEdges"><rect x="0.5" y="0.5" width="8" height="8" fill="#f4f4f4" stroke="#8a8a8a"/><rect x="2" y="4" width="5" height="1" fill="#2a4a9a"/><rect x="4" y="2" width="1" height="5" fill="#2a4a9a"/></svg>
<svg class="a" style="left:1336px;top:284px;" width="6" height="1" viewBox="0 0 6 1" shape-rendering="crispEdges"><rect x="0" y="0" width="6" height="1" fill="url(#pdh)"/></svg>
<svg class="a" style="left:1343px;top:278px;" width="13" height="12" viewBox="0 0 13 12" shape-rendering="crispEdges"><rect x="0" y="0" width="13" height="12" fill="#333"/><rect x="1" y="3" width="3" height="2" fill="#fff"/><rect x="5" y="3" width="3" height="2" fill="#fff"/><rect x="9" y="3" width="3" height="2" fill="#fff"/><rect x="1" y="6" width="3" height="2" fill="#fff"/><rect x="5" y="6" width="3" height="2" fill="#fff"/><rect x="9" y="6" width="3" height="2" fill="#fff"/><rect x="1" y="9" width="3" height="2" fill="#fff"/><rect x="5" y="9" width="3" height="2" fill="#fff"/><rect x="9" y="9" width="3" height="2" fill="#fff"/></svg>
<div class="t" style="left:1361px;top:279.00px;font-size:10.6px;color:#111;">HeaderDim</div>
<svg class="a" style="left:1326px;top:296px;" width="9" height="9" viewBox="0 0 9 9" shape-rendering="crispEdges"><rect x="0.5" y="0.5" width="8" height="8" fill="#f4f4f4" stroke="#8a8a8a"/><rect x="2" y="4" width="5" height="1" fill="#2a4a9a"/></svg>
<svg class="a" style="left:1336px;top:300px;" width="6" height="1" viewBox="0 0 6 1" shape-rendering="crispEdges"><rect x="0" y="0" width="6" height="1" fill="url(#pdh)"/></svg>
<svg class="a" style="left:1343px;top:294px;" width="13" height="12" viewBox="0 0 13 12" shape-rendering="crispEdges"><rect x="0" y="0" width="13" height="12" fill="#333"/><rect x="1" y="3" width="3" height="2" fill="#fff"/><rect x="5" y="3" width="3" height="2" fill="#fff"/><rect x="9" y="3" width="3" height="2" fill="#fff"/><rect x="1" y="6" width="3" height="2" fill="#fff"/><rect x="5" y="6" width="3" height="2" fill="#fff"/><rect x="9" y="6" width="3" height="2" fill="#fff"/><rect x="1" y="9" width="3" height="2" fill="#fff"/><rect x="5" y="9" width="3" height="2" fill="#fff"/><rect x="9" y="9" width="3" height="2" fill="#fff"/></svg>
<div class="t" style="left:1361px;top:295.00px;font-size:10.6px;color:#111;">InvLine</div>
<svg class="a" style="left:1345px;top:312px;" width="9" height="9" viewBox="0 0 9 9" shape-rendering="crispEdges"><rect x="0.5" y="0.5" width="8" height="8" fill="#f4f4f4" stroke="#8a8a8a"/><rect x="2" y="4" width="5" height="1" fill="#2a4a9a"/></svg>
<svg class="a" style="left:1355px;top:316px;" width="6" height="1" viewBox="0 0 6 1" shape-rendering="crispEdges"><rect x="0" y="0" width="6" height="1" fill="url(#pdh)"/></svg>
<svg class="a" style="left:1362px;top:311px;" width="13" height="10" viewBox="0 0 13 10" shape-rendering="crispEdges"><rect x="0" y="0" width="13" height="10" fill="#333"/><rect x="1" y="1" width="3" height="2" fill="#fff"/><rect x="9" y="1" width="3" height="2" fill="#fff"/><rect x="1" y="4" width="3" height="2" fill="#fff"/><rect x="9" y="4" width="3" height="2" fill="#fff"/><rect x="1" y="7" width="3" height="2" fill="#fff"/><rect x="9" y="7" width="3" height="2" fill="#fff"/><rect x="5" y="1" width="3" height="8" fill="#2a9ae0"/></svg>
<div class="t" style="left:1380px;top:311.00px;font-size:10.6px;color:#111;">Columns</div>
<svg class="a" style="left:1368px;top:332px;" width="12" height="1" viewBox="0 0 12 1" shape-rendering="crispEdges"><rect x="0" y="0" width="12" height="1" fill="url(#pdh)"/></svg>
<svg class="a" style="left:1381px;top:326px;" width="13" height="13" viewBox="0 0 13 13" shape-rendering="crispEdges"><rect x="0.5" y="0.5" width="12" height="12" fill="#fff" stroke="#333"/></svg>
<div class="t" style="left:1383px;top:327.5px;font-size:9px;letter-spacing:-0.8px;color:#111">12</div>
<div class="t" style="left:1399px;top:327.00px;font-size:10.6px;color:#111;">InvLine_Id</div>
<svg class="a" style="left:1368px;top:348px;" width="12" height="1" viewBox="0 0 12 1" shape-rendering="crispEdges"><rect x="0" y="0" width="12" height="1" fill="url(#pdh)"/></svg>
<svg class="a" style="left:1381px;top:342px;" width="13" height="13" viewBox="0 0 13 13" shape-rendering="crispEdges"><rect x="0.5" y="0.5" width="12" height="12" fill="#fff" stroke="#333"/></svg>
<div class="t" style="left:1383px;top:343.5px;font-size:9px;letter-spacing:-0.8px;color:#111">12</div>
<div class="t" style="left:1399px;top:343.00px;font-size:10.6px;color:#111;">CopyLoop_Id</div>
<svg class="a" style="left:1368px;top:364px;" width="12" height="1" viewBox="0 0 12 1" shape-rendering="crispEdges"><rect x="0" y="0" width="12" height="1" fill="url(#pdh)"/></svg>
<svg class="a" style="left:1381px;top:358px;" width="13" height="13" viewBox="0 0 13 13" shape-rendering="crispEdges"><rect x="0.5" y="0.5" width="12" height="12" fill="#fff" stroke="#333"/><rect x="6" y="2" width="5" height="2" fill="#e8b820"/><rect x="6" y="4" width="5" height="2" fill="#c89a10"/><rect x="2" y="7" width="9" height="2" fill="#e8b820"/><rect x="2" y="9" width="9" height="2" fill="#c89a10"/></svg>
<div class="t" style="left:1399px;top:359.00px;font-size:10.6px;color:#111;">Amount</div>
<svg class="a" style="left:1368px;top:380px;" width="12" height="1" viewBox="0 0 12 1" shape-rendering="crispEdges"><rect x="0" y="0" width="12" height="1" fill="url(#pdh)"/></svg>
<svg class="a" style="left:1381px;top:374px;" width="13" height="13" viewBox="0 0 13 13" shape-rendering="crispEdges"><rect x="0.5" y="0.5" width="12" height="12" fill="#fff" stroke="#333"/></svg>
<div class="t" style="left:1383.5px;top:375px;font-size:11px;font-weight:bold;color:#1a5fb4;font-family:'Liberation Serif'">A</div>
<div class="t" style="left:1399px;top:375.00px;font-size:10.6px;color:#111;">AmountFormat</div>
<svg class="a" style="left:1368px;top:396px;" width="12" height="1" viewBox="0 0 12 1" shape-rendering="crispEdges"><rect x="0" y="0" width="12" height="1" fill="url(#pdh)"/></svg>
<svg class="a" style="left:1381px;top:390px;" width="13" height="13" viewBox="0 0 13 13" shape-rendering="crispEdges"><rect x="0.5" y="0.5" width="12" height="12" fill="#fff" stroke="#333"/><rect x="6" y="2" width="5" height="2" fill="#e8b820"/><rect x="6" y="4" width="5" height="2" fill="#c89a10"/><rect x="2" y="7" width="9" height="2" fill="#e8b820"/><rect x="2" y="9" width="9" height="2" fill="#c89a10"/></svg>
<div class="t" style="left:1399px;top:391.00px;font-size:10.6px;color:#111;">AmountInclVAT</div>
<svg class="a" style="left:1368px;top:412px;" width="12" height="1" viewBox="0 0 12 1" shape-rendering="crispEdges"><rect x="0" y="0" width="12" height="1" fill="url(#pdh)"/></svg>
<svg class="a" style="left:1381px;top:406px;" width="13" height="13" viewBox="0 0 13 13" shape-rendering="crispEdges"><rect x="0.5" y="0.5" width="12" height="12" fill="#fff" stroke="#333"/></svg>
<div class="t" style="left:1383.5px;top:407px;font-size:11px;font-weight:bold;color:#1a5fb4;font-family:'Liberation Serif'">A</div>
<div class="t" style="left:1399px;top:407.00px;font-size:10.6px;color:#111;">AmountInclVATFormat</div>
<div class="a" style="left:1262px;top:422px;width:657px;height:25px;background:#eeeef2;"></div>
<div class="a" style="left:1267px;top:422px;width:56px;height:22px;background:#f7f7f9;"></div>
<svg class="a" style="left:1272px;top:425px;" width="11" height="15" viewBox="0 0 11 15"><path d="M0 2.5a5.5 2.5 0 0 1 11 0v10a5.5 2.5 0 0 1 -11 0z" fill="#1e96d8"/></svg>
<div class="t" style="left:1292px;top:428.04px;font-size:10.8px;color:#1a6fc0;">Data</div>
<svg class="a" style="left:1332px;top:425px;" width="11" height="14" viewBox="0 0 11 14" shape-rendering="crispEdges"><rect x="0" y="0" width="3" height="3" fill="#1e6fc0"/><path d="M1 3v9h3M1 7h3" stroke="#333" fill="none"/><rect x="5" y="5" width="4" height="3" fill="#d9895a" stroke="#333"/><rect x="5" y="10" width="4" height="3" fill="#d9895a" stroke="#333"/></svg>
<div class="t" style="left:1350px;top:428.04px;font-size:10.8px;color:#111;">Report Tree</div>
<div class="a" style="left:1262px;top:447px;width:657px;height:3px;background:#dcdce0;"></div>
<div class="a" style="left:1262px;top:450px;width:657px;height:314px;background:#eeeef2;"></div>
<div class="t" style="left:1267px;top:455.04px;font-size:10.8px;color:#9c9ca8;">Properties</div>
<svg class="a" style="left:1328px;top:458px;" width="558" height="5" viewBox="0 0 558 5" shape-rendering="crispEdges"><rect x="0" y="0" width="558" height="5" fill="url(#pgr)"/></svg>
<svg class="a" style="left:1889px;top:456px;" width="8" height="9" viewBox="0 0 8 9" shape-rendering="crispEdges"><path d="M2 0h4v5h2v1h-3v3h-1v-3h-3v-1h1z M3 1v4h1v-4z" fill="#6a6a72" fill-rule="evenodd"/></svg>
<svg class="a" style="left:1907px;top:457px;" width="8" height="8" viewBox="0 0 8 8"><path d="M0.5 0.5l7 7M7.5 0.5l-7 7" stroke="#6a6a72" stroke-width="1.3"/></svg>
<div class="a" style="left:1262px;top:470px;width:657px;height:21px;background:#fff;border:1px solid #a0a0a0;border-right:none;"></div>
<div class="t" style="left:1270px;top:477.04px;font-size:10.8px;color:#000;font-weight:bold;letter-spacing:0.45px;">CopyLoop_Header_Address</div>
<div class="t" style="left:1432px;top:477.04px;font-size:10.8px;color:#111;">ChildBand</div>
<div class="a" style="left:1903px;top:473px;width:14px;height:15px;background:#fff;border:1px solid #6a6a6a;"></div>
<svg class="a" style="left:1907px;top:479px;" width="5" height="3" viewBox="0 0 5 3" shape-rendering="crispEdges"><path d="M0 0h5v1h-1v1h-1v1h-1v-1h-1v-1h-1z" fill="#222"/></svg>
<svg class="a" style="left:1267px;top:496px;" width="15" height="15" viewBox="0 0 15 15" shape-rendering="crispEdges"><rect x="0" y="1" width="4" height="4" fill="#333"/><rect x="1" y="2" width="2" height="2" fill="#fff"/><rect x="0" y="9" width="4" height="4" fill="#333"/><rect x="1" y="10" width="2" height="2" fill="#fff"/><path d="M6 1h8M6 3h8M6 5h6M6 9h8M6 11h8M6 13h6" stroke="#333"/></svg>
<div class="a" style="left:1287px;top:492px;width:24px;height:22px;background:#6ec0ff;"></div>
<svg class="a" style="left:1291px;top:495px;" width="10" height="17" viewBox="0 0 10 17" shape-rendering="crispEdges"><rect x="0.5" y="0.5" width="9" height="8" fill="#fff" stroke="#333"/><path d="M2 8l3-7 3 7M3.3 5.5h3.4" stroke="#333" fill="none" shape-rendering="auto"/><path d="M1 10h8v1l-6 4h6v1h-8v-1l6-4h-6z" fill="#333"/></svg>
<svg class="a" style="left:1301px;top:499px;" width="7" height="12" viewBox="0 0 7 12"><path d="M3.5 0v11M0.5 8l3 3 3-3" fill="none" stroke="#2a6ad0" stroke-width="1.1"/></svg>
<div class="a" style="left:1312px;top:495px;width:1px;height:16px;background:#8a8a8a;"></div>
<div class="a" style="left:1314px;top:492px;width:37px;height:22px;background:#6ec0ff;"></div>
<svg class="a" style="left:1319px;top:495px;" width="15" height="16" viewBox="0 0 15 16"><path d="M2 14L8 8" stroke="#333" stroke-width="3" stroke-linecap="round"/><circle cx="10" cy="5.5" r="4.5" fill="#333"/><path d="M10 2l3 0 0 3z" fill="#6ec0ff"/><circle cx="10.5" cy="5" r="1.6" fill="#6ec0ff"/></svg>
<svg class="a" style="left:1341px;top:503px;" width="5" height="3" viewBox="0 0 5 3" shape-rendering="crispEdges"><path d="M0 0h5v1h-1v1h-1v1h-1v-1h-1v-1h-1z" fill="#222"/></svg>
<svg class="a" style="left:1356px;top:496px;" width="11" height="15" viewBox="0 0 11 15"><path d="M6 0L1 8h4L3 15L10 6H6L8 0z" fill="#d98a1a"/></svg>
<div class="a" style="left:1376px;top:495px;width:1px;height:16px;background:#8a8a8a;"></div>
<svg class="a" style="left:1383px;top:498px;" width="13" height="12" viewBox="0 0 13 12"><path d="M1 0.5h11L8 5v6L5.5 9.5V5z" fill="#333"/><path d="M0 7h3M0 9h3" stroke="#333"/></svg>
<div class="a" style="left:1262px;top:516px;width:657px;height:185px;background:#fff;border-top:1px solid #828282;border-left:1px solid #828282;"></div>
<div class="a" style="left:1263px;top:517px;width:20px;height:184px;background:#e6e7e8;"></div>
<div class="a" style="left:1283px;top:517px;width:299px;height:16px;background:#e6e7e8;"></div>
<div class="a" style="left:1263px;top:517px;width:638px;height:184px;overflow:hidden">
<div class="t" style="left:24px;top:3.74px;font-size:10.8px;color:#111">(Name)</div>
<div class="t" style="left:323px;top:3.74px;font-size:10.8px;color:#111;font-weight:bold;color:#000;letter-spacing:0.45px">CopyLoop_Header_Address</div>
<div class="a" style="left:20px;top:15px;width:618px;height:1px;background:#ececec"></div>
<div class="t" style="left:24px;top:19.74px;font-size:10.8px;color:#111">Bookmark</div>
<div class="a" style="left:20px;top:31px;width:618px;height:1px;background:#ececec"></div>
<div class="t" style="left:24px;top:35.74px;font-size:10.8px;color:#111">Border</div>
<div class="t" style="left:323px;top:35.74px;font-size:10.8px;color:#111;">(Border)</div>
<div class="a" style="left:20px;top:47px;width:618px;height:1px;background:#ececec"></div>
<div class="t" style="left:24px;top:51.74px;font-size:10.8px;color:#111">CanBreak</div>
<div class="t" style="left:323px;top:51.74px;font-size:10.8px;color:#111;">False</div>
<div class="a" style="left:20px;top:63px;width:618px;height:1px;background:#ececec"></div>
<div class="t" style="left:24px;top:67.74px;font-size:10.8px;color:#111">CanGrow</div>
<div class="t" style="left:323px;top:67.74px;font-size:10.8px;color:#111;">False</div>
<div class="a" style="left:20px;top:79px;width:618px;height:1px;background:#ececec"></div>
<div class="t" style="left:24px;top:83.74px;font-size:10.8px;color:#111">CanShrink</div>
<div class="t" style="left:323px;top:83.74px;font-size:10.8px;color:#111;font-weight:bold;color:#000;letter-spacing:0.45px">True</div>
<div class="a" style="left:20px;top:95px;width:618px;height:1px;background:#ececec"></div>
<div class="t" style="left:24px;top:99.74px;font-size:10.8px;color:#111">CompleteToNRows</div>
<div class="t" style="left:323px;top:99.74px;font-size:10.8px;color:#111;">0</div>
<div class="a" style="left:20px;top:111px;width:618px;height:1px;background:#ececec"></div>
<div class="t" style="left:24px;top:115.74px;font-size:10.8px;color:#111">Cursor</div>
<div class="t" style="left:323px;top:115.74px;font-size:10.8px;color:#111;">Default</div>
<div class="a" style="left:20px;top:127px;width:618px;height:1px;background:#ececec"></div>
<div class="t" style="left:24px;top:131.74px;font-size:10.8px;color:#111">EvenStyle</div>
<div class="a" style="left:20px;top:143px;width:618px;height:1px;background:#ececec"></div>
<div class="t" style="left:24px;top:147.74px;font-size:10.8px;color:#111">EvenStylePriority</div>
<div class="t" style="left:323px;top:147.74px;font-size:10.8px;color:#111;">UseFill</div>
<div class="a" style="left:20px;top:159px;width:618px;height:1px;background:#ececec"></div>
<div class="t" style="left:24px;top:163.74px;font-size:10.8px;color:#111">Exportable</div>
<div class="t" style="left:323px;top:163.74px;font-size:10.8px;color:#111;">True</div>
<div class="a" style="left:20px;top:175px;width:618px;height:1px;background:#ececec"></div>
<div class="t" style="left:24px;top:179.74px;font-size:10.8px;color:#111">ExportableExpression</div>
<div class="a" style="left:319px;top:0;width:1px;height:184px;background:#eaeaea"></div>
</div>
<svg class="a" style="left:1269px;top:552px;" width="6" height="10" viewBox="0 0 6 10"><path d="M1 1l4 4-4 4" fill="none" stroke="#333" stroke-width="1.6"/></svg>
<div class="a" style="left:1901px;top:517px;width:18px;height:184px;background:#f0f0f0;"></div>
<div class="a" style="left:1911px;top:535px;width:2px;height:51px;background:#868686;"></div>
<div class="a" style="left:1262px;top:701px;width:657px;height:63px;background:#e6e7e8;border:1px solid #a0a0a0;border-right:none;"></div>
<div class="t" style="left:1268px;top:709.74px;font-size:10.8px;color:#000;font-weight:bold;letter-spacing:0.4px;">(Name)</div>
<div class="t" style="left:1268px;top:724.74px;font-size:10.8px;color:#111;">Gets or sets the name of the object.</div>
<div class="a" style="left:28px;top:764px;width:1891px;height:3px;background:#dcdce0;"></div>
<div class="t" style="left:33px;top:772.54px;font-size:10.8px;color:#9c9ca8;">Messages</div>
<svg class="a" style="left:92px;top:775px;" width="1794" height="5" viewBox="0 0 1794 5" shape-rendering="crispEdges"><rect x="0" y="0" width="1794" height="5" fill="url(#pgr)"/></svg>
<svg class="a" style="left:1889px;top:773px;" width="8" height="9" viewBox="0 0 8 9" shape-rendering="crispEdges"><path d="M2 0h4v5h2v1h-3v3h-1v-3h-3v-1h1z M3 1v4h1v-4z" fill="#6a6a72" fill-rule="evenodd"/></svg>
<svg class="a" style="left:1907px;top:774px;" width="8" height="8" viewBox="0 0 8 8"><path d="M0.5 0.5l7 7M7.5 0.5l-7 7" stroke="#6a6a72" stroke-width="1.3"/></svg>
<div class="a" style="left:29px;top:788px;width:74px;height:22px;background:#6ec0ff;"></div>
<svg class="a" style="left:33px;top:791px;" width="16" height="16" viewBox="0 0 16 16"><circle cx="8" cy="8" r="7.5" fill="#e02020"/><path d="M5 5l6 6M11 5l-6 6" stroke="#fff" stroke-width="2.2"/></svg>
<div class="t" style="left:53px;top:794.04px;font-size:10.8px;color:#111;">Errors: 0</div>
<div class="a" style="left:104px;top:790px;width:1px;height:18px;background:#9a9a9a;"></div>
<div class="a" style="left:106px;top:788px;width:90px;height:22px;background:#6ec0ff;"></div>
<svg class="a" style="left:110px;top:791px;" width="16" height="15" viewBox="0 0 16 15"><path d="M8 0.5L15.5 14.5H0.5z" fill="#f5c400" stroke="#f5c400" stroke-linejoin="round"/><rect x="7" y="5" width="2" height="5" fill="#111"/><rect x="7" y="11" width="2" height="2" fill="#111"/></svg>
<div class="t" style="left:130px;top:794.04px;font-size:10.8px;color:#111;">Warnings: 0</div>
<div class="a" style="left:197px;top:790px;width:1px;height:18px;background:#9a9a9a;"></div>
<svg class="a" style="left:204px;top:791px;" width="15" height="16" viewBox="0 0 15 16"><path d="M5 2.6A6.2 6.2 0 1 0 9.5 2.4" fill="none" stroke="#444" stroke-width="1.2"/><path d="M2.5 0.8L5.2 2.7L3.3 5.3" fill="none" stroke="#444" stroke-width="1.2"/></svg>
<div class="t" style="left:222.5px;top:794.04px;font-size:10.8px;color:#111;">Refresh</div>
<svg class="a" style="left:274px;top:792px;" width="13" height="13" viewBox="0 0 13 13"><path d="M1 1l11 11M12 1L1 12" stroke="#c03020" stroke-width="2"/></svg>
<div class="t" style="left:292.5px;top:794.04px;font-size:10.8px;color:#111;">Close</div>
<div class="a" style="left:28px;top:812px;width:1891px;height:25px;background:#c6c6c8;border-top:1px solid #8a8a8a;border-bottom:1px solid #8a8a8a;border-left:1px solid #8a8a8a;"></div>
<div class="t" style="left:36px;top:820.04px;font-size:10.8px;color:#111;">Description</div>
<div class="a" style="left:627px;top:814px;width:1px;height:21px;background:#a8a8aa;"></div>
<div class="t" style="left:635.5px;top:820.04px;font-size:10.8px;color:#111;">Line</div>
<div class="a" style="left:688px;top:814px;width:1px;height:21px;background:#a8a8aa;"></div>
<div class="t" style="left:697px;top:820.04px;font-size:10.8px;color:#111;">Column</div>
<div class="a" style="left:748px;top:814px;width:1px;height:21px;background:#a8a8aa;"></div>
<div class="a" style="left:28px;top:837px;width:1891px;height:169px;background:#fff;border-left:1px solid #8a8a8a;"></div>
<div class="a" style="left:28px;top:1005px;width:1891px;height:1px;background:#a0a0a0;"></div>
<div class="a" style="left:0px;top:1006px;width:1919px;height:25px;background:#007acc;"></div>
<svg class="a" style="left:3px;top:1012px;" width="16" height="17" viewBox="0 0 16 17" shape-rendering="crispEdges"><rect x="0" y="2" width="15" height="3" fill="#fff"/><rect x="1" y="0" width="3" height="17" fill="#fff"/><path d="M0 3h4M2 1v4" stroke="#222"/><rect x="6" y="3" width="1" height="1" fill="#222"/><rect x="8" y="3" width="1" height="1" fill="#222"/><rect x="10" y="3" width="1" height="1" fill="#222"/><rect x="12" y="3" width="1" height="1" fill="#222"/><rect x="14" y="3" width="1" height="1" fill="#222"/><rect x="2" y="7" width="1" height="1" fill="#222"/><rect x="2" y="9" width="1" height="1" fill="#222"/><rect x="2" y="11" width="1" height="1" fill="#222"/><rect x="2" y="13" width="1" height="1" fill="#222"/><rect x="2" y="15" width="1" height="1" fill="#222"/><rect x="7.5" y="8.5" width="6" height="6" fill="#d9895a" stroke="#3a2a20"/></svg>
<div class="t" style="left:24px;top:1015.37px;font-size:10.4px;color:#fff;">0 mm; 0 mm</div>
<svg class="a" style="left:124px;top:1012px;" width="16" height="17" viewBox="0 0 16 17" shape-rendering="crispEdges"><rect x="0" y="2" width="16" height="3" fill="#fff"/><rect x="1" y="0" width="3" height="17" fill="#fff"/><rect x="13" y="0" width="3" height="6" fill="#fff"/><path d="M0 3h16M2 1v16M14 1v4" stroke="#222"/><rect x="7.5" y="8.5" width="6" height="6" fill="#d9895a" stroke="#3a2a20"/></svg>
<div class="t" style="left:145px;top:1015.37px;font-size:10.4px;color:#fff;">182,3 mm; 35 mm</div>
<div class="t" style="left:244px;top:1015.28px;font-size:10.5px;color:#fff;">CopyLoop_Header_Address</div>
<div class="a" style="left:1640px;top:1008px;width:1px;height:22px;background:#5aaee0;"></div>
<svg class="a" style="left:1650px;top:1012px;" width="15" height="15" viewBox="0 0 15 15" shape-rendering="crispEdges"><rect x="0.5" y="0.5" width="14" height="14" fill="#fff" stroke="#111"/></svg>
<svg class="a" style="left:1675px;top:1012px;" width="15" height="15" viewBox="0 0 15 15" shape-rendering="crispEdges"><rect x="0.5" y="0.5" width="14" height="14" fill="#fff" stroke="#111"/></svg>
<svg class="a" style="left:1700px;top:1012px;" width="15" height="15" viewBox="0 0 15 15" shape-rendering="crispEdges"><rect x="0.5" y="0.5" width="14" height="14" fill="#fff" stroke="#111"/></svg>
<svg class="a" style="left:1653px;top:1017px;" width="9" height="5" viewBox="0 0 9 5" shape-rendering="crispEdges"><path d="M2 0v5M1 1v3M0 2v1M7 0v5M8 1v3M8.5 2v1" stroke="#111"/></svg>
<svg class="a" style="left:1679px;top:1015px;" width="7" height="9" viewBox="0 0 7 9" shape-rendering="crispEdges"><path d="M3 0h1v1h1v1h-3v-1h1zM2 7h3v1h-1v1h-1v-1h-1z" fill="#111"/></svg>
<div class="t" style="left:1703px;top:1016.36px;font-size:8px;color:#111;letter-spacing:-0.5px;">1:1</div>
<div class="t" style="left:1726px;top:1016.04px;font-size:10.8px;color:#fff;">125%</div>
<div class="a" style="left:1767px;top:1019px;width:9px;height:2px;background:#fff;"></div>
<div class="a" style="left:1781px;top:1019px;width:103px;height:1px;background:#6ab8ee;"></div>
<div class="a" style="left:1833px;top:1014px;width:3px;height:11px;background:#fff;"></div>
<svg class="a" style="left:1887px;top:1015px;" width="10" height="10" viewBox="0 0 10 10" shape-rendering="crispEdges"><path d="M0 4h10v2h-10zM4 0h2v10h-2z" fill="#fff"/></svg>
</body></html>
